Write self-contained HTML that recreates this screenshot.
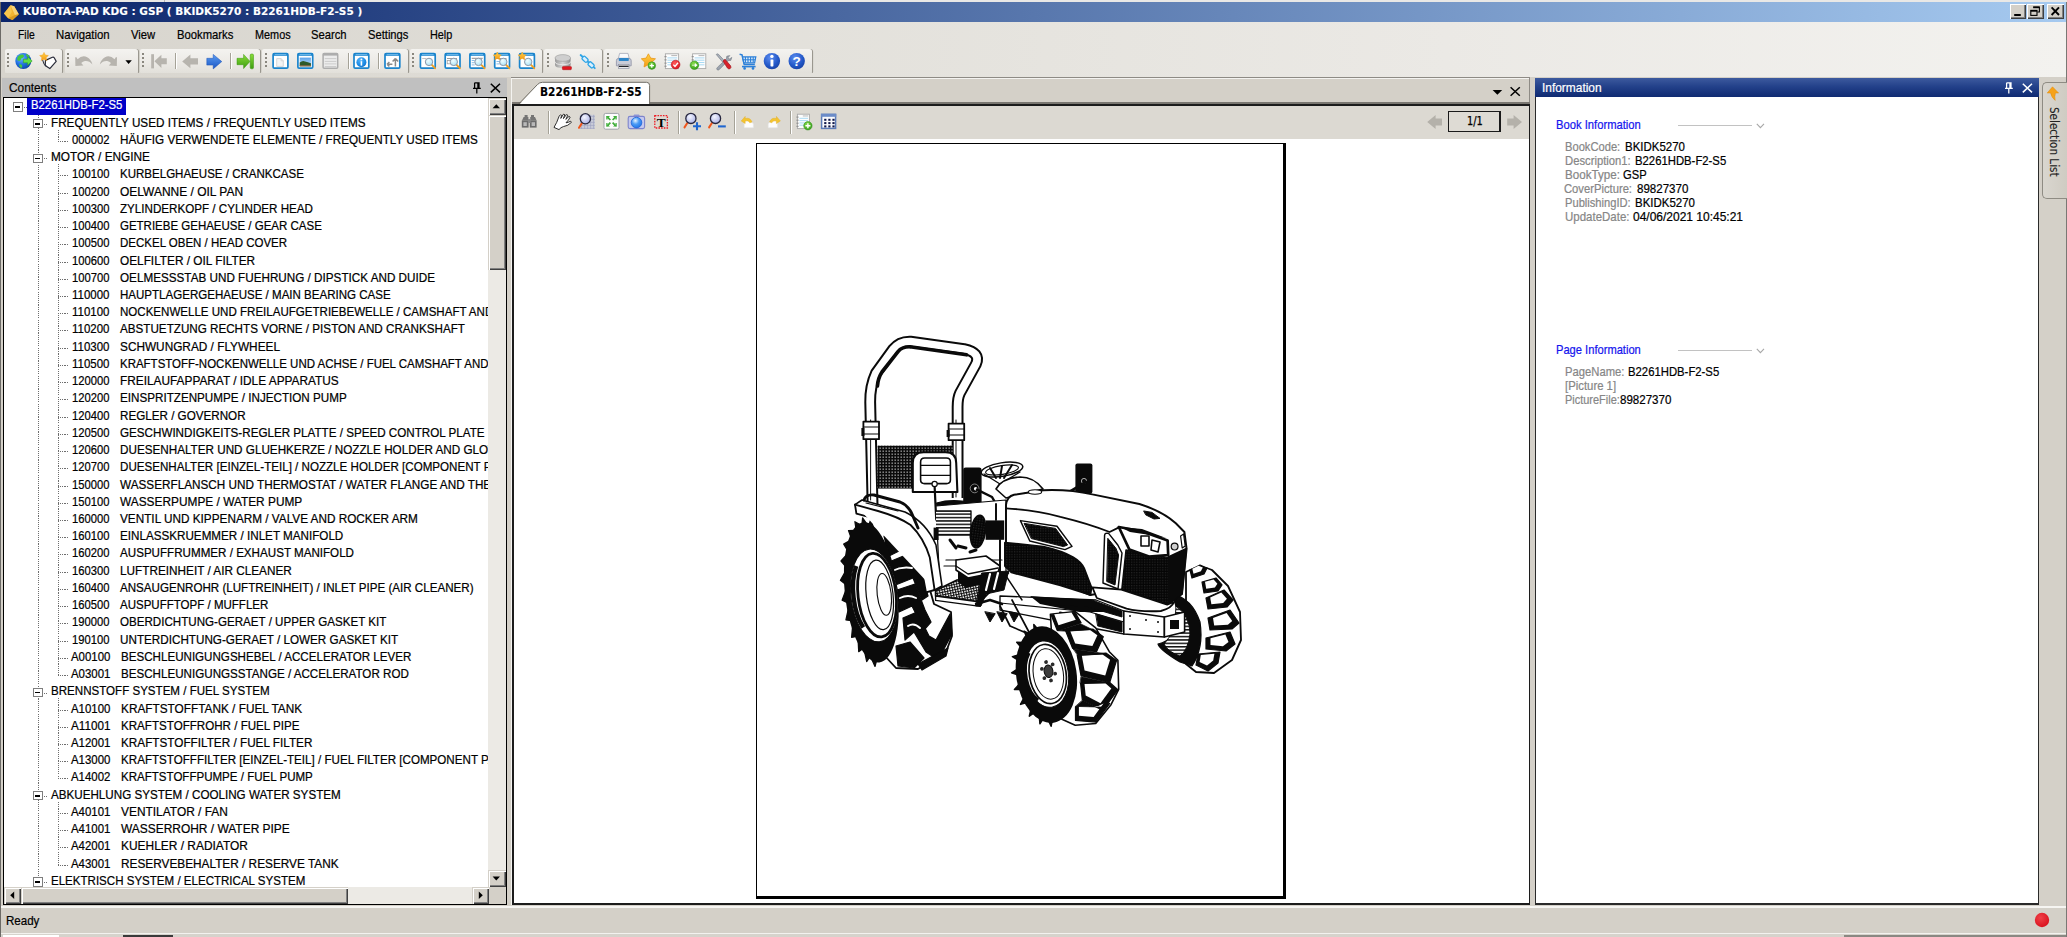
<!DOCTYPE html>
<html lang="de"><head><meta charset="utf-8"><title>KUBOTA-PAD KDG : GSP ( BKIDK5270 : B2261HDB-F2-S5 )</title>
<style>
html,body{margin:0;padding:0;}
body{width:2067px;height:937px;overflow:hidden;background:#d4d0c8;position:relative;font-family:"Liberation Sans",sans-serif;font-size:11.7px;color:#000;}
.a{position:absolute;}
.t{position:absolute;white-space:nowrap;line-height:16px;height:16px;}
#title{left:1px;top:2px;width:2065px;height:19.5px;background:linear-gradient(90deg,#0a246a 0%,#a6caf0 100%);}
#title .t{font-family:"DejaVu Sans Condensed","DejaVu Sans","Liberation Sans",sans-serif;font-weight:bold;color:#fff;font-size:11.6px;left:21px;top:1.5px;}
.wb{position:absolute;top:2.3px;height:14.4px;width:16.4px;background:#d4d0c8;box-shadow:inset 1px 1px 0 #fff,inset -1px -1px 0 #404040,inset -2px -2px 0 #808080;}
#menubar{left:1px;top:21.5px;width:2065px;height:55px;background:linear-gradient(90deg,#d7d4cd 0%,#e2e0da 35%,#ebe9e5 70%,#f3f2ef 100%);}
.mi{position:absolute;top:27px;line-height:16px;font-size:11.7px;white-space:nowrap;}
.strip{position:absolute;top:48.5px;height:24.3px;border-radius:2px 3px 1px 1px;background:linear-gradient(180deg,#f4f3f0 0%,#eceae6 55%,#e2e0da 100%);box-shadow:1.1px 0 0 #9a978f;}
.grip{position:absolute;top:53px;width:2px;height:15px;background:repeating-linear-gradient(180deg,#8a877f 0 2px,rgba(255,255,255,0) 2px 4px);}
.sep{position:absolute;width:1px;background:#a5a297;box-shadow:1px 0 0 #fff;}
.ic{position:absolute;overflow:visible;}
#tree{left:4px;top:98px;width:484.6px;height:789px;background:#fff;overflow:hidden;}
.row{-webkit-text-stroke:0.22px currentColor;position:absolute;white-space:nowrap;line-height:17px;height:17px;font-size:12.7px;color:#000;}
.sx{display:inline-block;transform-origin:0 50%;white-space:pre;}
.box{position:absolute;width:7.5px;height:7.3px;border:1px solid #7e7e7e;background:#fff;}
.box i{position:absolute;left:1.3px;top:3.0px;width:5px;height:1.4px;background:#000;}
.hd{position:absolute;height:1px;background:repeating-linear-gradient(90deg,#6e6e6e 0 1.08px,rgba(255,255,255,0) 1.08px 2.153px);}
.vd{position:absolute;width:1px;background:repeating-linear-gradient(180deg,#6e6e6e 0 1.08px,rgba(255,255,255,0) 1.08px 2.153px);}
.sbtn{position:absolute;background:#d4d0c8;box-shadow:inset 1px 1px 0 #d4d0c8,inset 2px 2px 0 #fff,inset -1px -1px 0 #404040,inset -2px -2px 0 #808080;}
.track{position:absolute;background:#eceae5;}
.lbl{color:#6e6e6e;}
</style></head><body>

<div class="a" style="left:0;top:0;width:2067px;height:2px;background:#e9e8e6"></div>
<div class="a" style="left:164px;top:0;width:1px;height:2px;background:#b8b6b0"></div>
<div class="a" style="left:0;top:2px;width:1px;height:935px;background:#6c6a66"></div>
<div class="a" style="left:2066px;top:2px;width:1px;height:935px;background:#7a7874"></div>
<div id="title" class="a"><svg class="ic" style="left:2px;top:1.5px" width="17" height="17" viewBox="0 0 17 17"><path d="M1 9.5 L7.5 1.2 L11.2 2.2 L15.8 10.2 L9.5 16 L5.2 14.2 Z" fill="#f2b431"/><path d="M7.5 1.2 L11.2 2.2 L15.8 10.2 L12 11 Z" fill="#f7d277"/><path d="M1 9.5 L7.5 1.2 L8.8 8 L5.2 14.2 Z" fill="#f9c64c"/><path d="M5.2 14.2 L9.5 16 L15.8 10.2 L12 11 Z" fill="#d99a1e"/></svg>
<div class="t" style="left:22.00px;top:1.89px;font-size:11.00px;color:#fff;-webkit-text-stroke:0.10px currentColor;font-family:'DejaVu Sans Condensed','DejaVu Sans',sans-serif;font-weight:bold;"><span id="t1" class="sx" style="transform:scaleX(1.0613)">KUBOTA-PAD KDG : GSP ( BKIDK5270 : B2261HDB-F2-S5 )</span></div>
<div class="wb" style="left:2009px"><svg class="ic" style="left:0;top:0" width="16.4" height="14.4" viewBox="0 0 16.4 14.4"><rect x="4.2" y="10" width="6.6" height="2" fill="#000"/></svg></div><div class="wb" style="left:2026.4px"><svg class="ic" style="left:0;top:0" width="16.4" height="14.4" viewBox="0 0 16.4 14.4"><path d="M6.2 3 h6.2 v5 h-2" fill="none" stroke="#000" stroke-width="1.1"/><rect x="6.2" y="2.6" width="6.2" height="1.6" fill="#000"/><rect x="3.8" y="6.4" width="6.2" height="5" fill="none" stroke="#000" stroke-width="1.1"/><rect x="3.8" y="6" width="6.2" height="1.7" fill="#000"/></svg></div><div class="wb" style="left:2045.8px;width:17px"><svg class="ic" style="left:0;top:0" width="17" height="14.4" viewBox="0 0 17 14.4"><path d="M4.6 3.4 L12 11 M12 3.4 L4.6 11" stroke="#000" stroke-width="1.9" fill="none"/></svg></div></div>
<div id="menubar" class="a"></div>
<div class="t" style="left:18.20px;top:27.09px;font-size:13.30px;color:#000;-webkit-text-stroke:0.22px currentColor;"><span id="t2" class="sx" style="transform:scaleX(0.7790)">File</span></div>
<div class="t" style="left:56.40px;top:27.09px;font-size:13.30px;color:#000;-webkit-text-stroke:0.22px currentColor;"><span id="t3" class="sx" style="transform:scaleX(0.8545)">Navigation</span></div>
<div class="t" style="left:131.00px;top:27.09px;font-size:13.30px;color:#000;-webkit-text-stroke:0.22px currentColor;"><span id="t4" class="sx" style="transform:scaleX(0.8463)">View</span></div>
<div class="t" style="left:176.70px;top:27.09px;font-size:13.30px;color:#000;-webkit-text-stroke:0.22px currentColor;"><span id="t5" class="sx" style="transform:scaleX(0.8479)">Bookmarks</span></div>
<div class="t" style="left:254.60px;top:27.09px;font-size:13.30px;color:#000;-webkit-text-stroke:0.22px currentColor;"><span id="t6" class="sx" style="transform:scaleX(0.8166)">Memos</span></div>
<div class="t" style="left:311.30px;top:27.09px;font-size:13.30px;color:#000;-webkit-text-stroke:0.22px currentColor;"><span id="t7" class="sx" style="transform:scaleX(0.8448)">Search</span></div>
<div class="t" style="left:368.00px;top:27.09px;font-size:13.30px;color:#000;-webkit-text-stroke:0.22px currentColor;"><span id="t8" class="sx" style="transform:scaleX(0.8408)">Settings</span></div>
<div class="t" style="left:429.90px;top:27.09px;font-size:13.30px;color:#000;-webkit-text-stroke:0.22px currentColor;"><span id="t9" class="sx" style="transform:scaleX(0.8151)">Help</span></div>
<div class="strip" style="left:4.6px;width:57.9px"></div>
<div class="grip" style="left:7.2px"></div>
<div class="strip" style="left:64.6px;width:73.2px"></div>
<div class="grip" style="left:67.2px"></div>
<div class="strip" style="left:139.8px;width:120.2px"></div>
<div class="grip" style="left:142.4px"></div>
<div class="strip" style="left:262.0px;width:145.6px"></div>
<div class="grip" style="left:264.6px"></div>
<div class="strip" style="left:409.6px;width:132.4px"></div>
<div class="grip" style="left:412.2px"></div>
<div class="strip" style="left:544.0px;width:58.3px"></div>
<div class="grip" style="left:546.6px"></div>
<div class="strip" style="left:604.3px;width:207.7px"></div>
<div class="grip" style="left:606.9px"></div>
<div class="sep" style="left:174.5px;top:53px;height:16px"></div>
<div class="sep" style="left:230.3px;top:53px;height:16px"></div>
<div class="sep" style="left:348.0px;top:53px;height:16px"></div>
<div class="sep" style="left:378.2px;top:53px;height:16px"></div>
<svg class="ic" style="left:0;top:44px" width="830" height="34" viewBox="0 44 830 34"><defs>
<radialGradient id="gGlobe" cx="38%" cy="32%" r="75%"><stop offset="0" stop-color="#6fb6ff"/><stop offset=".55" stop-color="#1f6fe0"/><stop offset="1" stop-color="#0c3fa0"/></radialGradient>
<linearGradient id="gBlue" x1="0" y1="0" x2="0" y2="1"><stop offset="0" stop-color="#5a9cf2"/><stop offset="1" stop-color="#1a56c4"/></linearGradient>
<linearGradient id="gGreen" x1="0" y1="0" x2="0" y2="1"><stop offset="0" stop-color="#8ade3a"/><stop offset="1" stop-color="#3c9c10"/></linearGradient>
<radialGradient id="gInfo" cx="40%" cy="30%" r="80%"><stop offset="0" stop-color="#5d8df0"/><stop offset=".6" stop-color="#2358c8"/><stop offset="1" stop-color="#153c9c"/></radialGradient>
<radialGradient id="gInfo2" cx="40%" cy="30%" r="80%"><stop offset="0" stop-color="#58b4f8"/><stop offset=".6" stop-color="#1c8ce6"/><stop offset="1" stop-color="#1470c8"/></radialGradient>
<radialGradient id="gLens" cx="40%" cy="35%" r="70%"><stop offset="0" stop-color="#f4f6ff"/><stop offset="1" stop-color="#aab0e6"/></radialGradient>
<radialGradient id="gLens2" cx="40%" cy="35%" r="70%"><stop offset="0" stop-color="#f2fdff"/><stop offset="1" stop-color="#a6e2f6"/></radialGradient>
<radialGradient id="gCam" cx="40%" cy="32%" r="75%"><stop offset="0" stop-color="#e6f3ff"/><stop offset=".45" stop-color="#4b9cf6"/><stop offset="1" stop-color="#1c6fe6"/></radialGradient>
<radialGradient id="gRed" cx="40%" cy="32%" r="75%"><stop offset="0" stop-color="#ff5a5a"/><stop offset="1" stop-color="#d80f1c"/></radialGradient>
<radialGradient id="gGrn" cx="40%" cy="32%" r="75%"><stop offset="0" stop-color="#86dc4a"/><stop offset="1" stop-color="#2f9a18"/></radialGradient>
<linearGradient id="gStar" x1="0" y1="0" x2="0" y2="1"><stop offset="0" stop-color="#ffd24a"/><stop offset="1" stop-color="#f59a12"/></linearGradient>
<linearGradient id="gSky" x1="0" y1="0" x2="0" y2="1"><stop offset="0" stop-color="#5aa2ea"/><stop offset="1" stop-color="#cfe6fa"/></linearGradient>
<linearGradient id="gCyl" x1="0" y1="0" x2="1" y2="0"><stop offset="0" stop-color="#9a9a9a"/><stop offset=".5" stop-color="#d6d6d6"/><stop offset="1" stop-color="#8c8c8c"/></linearGradient>
</defs><circle cx="23.3" cy="61" r="8" fill="url(#gGlobe)"/><path d="M18 56.5 q2.5 -2.6 5.5 -1.8 q1.2 1.8 -0.6 3 q-2.2 .4 -2.2 2.6 q-1.8 1.2 -3.4 -.4 q-.4 -1.8 .7 -3.4z M19 64.5 q2 -.8 3.2 1 q.4 1.8 -1 2.6 q-2 -1 -2.2 -3.6z M26 54 q2.2 .4 3.6 2.2 l-2.2 .8 q-1.6 -1 -1.4 -3z" fill="#46c83c"/><path d="M23.4 59.2 h4.2 v-2.6 l4.6 4.4 l-4.6 4.4 v-2.6 h-4.2z" fill="#5fdc46" stroke="#2d9a22" stroke-width=".5"/><path d="M45.5 60.4 L52.4 57.2 Q53.6 56.8 54.2 57.8 L56.2 61.4 L49.8 68.6 L45.2 65.6 Z" fill="#fff" stroke="#2a2c3a" stroke-width="1.2" stroke-linejoin="round"/><path d="M42.6 60 q.8 4.2 3.8 6.4" fill="none" stroke="#2a2c3a" stroke-width="1.1"/><path d="M44 52.4 l1.4 2.7 l3 .4 l-2.2 2.1 l.5 3 l-2.7 -1.4 l-2.7 1.4 l.5 -3 l-2.2 -2.1 l3 -.4z" fill="url(#gStar)" stroke="#ee9410" stroke-width=".4"/><path d="M75.2 57.2 l1.2 0 l1.2 2 q4.6 -4.4 9.6 -2 q4 2.2 5.2 7.2 q-3.2 -3.8 -7.4 -3.4 q-2.2 .4 -3.8 2 l2.2 2.4 l-8 .6z" fill="#b7b4ae"/><path d="M117 57.2 l-1.2 0 l-1.2 2 q-4.6 -4.4 -9.6 -2 q-4 2.2 -5.2 7.2 q3.2 -3.8 7.4 -3.4 q2.2 .4 3.8 2 l-2.2 2.4 l8 .6z" fill="#b7b4ae"/><polygon points="125.4,60.2 131.8,60.2 128.6,64" fill="#000"/><rect x="151.2" y="54.2" width="2.8" height="14.2" fill="#b7b4ae"/><path d="M154.4 61.3 l7 -6.6 v3.6 h5.4 v6 h-5.4 v3.6z" fill="#b7b4ae"/><path d="M182.2 61.4 l8.2 -6.8 v3.7 h7.6 v6.3 h-7.6 v3.7z" fill="#b7b4ae"/><path d="M221.8 61.6 l-8.6 -7.2 v3.9 h-6.4 v6.8 h6.4 v3.8z" fill="url(#gBlue)" stroke="#1a50b4" stroke-width=".5"/><path d="M250 61.4 l-6.4 -7 v3.9 h-6.6 v6.4 h6.6 v3.9z" fill="url(#gGreen)" stroke="#3a9410" stroke-width=".5"/><rect x="250.2" y="54" width="3.3" height="14.8" rx="1.2" fill="url(#gGreen)" stroke="#3a9410" stroke-width=".5"/><rect x="273.1" y="53.6" width="14.8" height="14.6" rx="1.2" fill="#fff" stroke="#1b84cc" stroke-width="1.7"/><rect x="273.0" y="53.2" width="15" height="2.6" fill="#1b84cc"/><rect x="274.7" y="54.2" width="11.6" height=".9" fill="#7cc0ee"/><path d="M276.7 58.6 h4.4 l2.2 2.2 v5.6 h-6.6z" fill="#f4f4f4" stroke="#cfcfcf" stroke-width=".8"/><path d="M281.1 58.6 v2.2 h2.2" fill="none" stroke="#cfcfcf" stroke-width=".8"/><rect x="297.9" y="53.6" width="14.8" height="14.6" rx="1.2" fill="#fff" stroke="#1b84cc" stroke-width="1.7"/><rect x="297.8" y="53.2" width="15" height="2.6" fill="#1b84cc"/><rect x="299.5" y="54.2" width="11.6" height=".9" fill="#7cc0ee"/><rect x="299.7" y="57.6" width="11.2" height="8.6" fill="url(#gSky)"/><path d="M299.7 66.2 v-3.6 q3 -2.6 5.4 -1 q2.8 .6 5.8 1.6 v3z" fill="#2e5a2a"/><rect x="299.7" y="65.2" width="11.2" height="1.2" fill="#8a6a4a"/><rect x="323.1" y="53.6" width="14.6" height="14.6" rx="1" fill="#ececec" stroke="#adadad" stroke-width="1.5"/><rect x="322.9" y="53.2" width="15" height="2.4" fill="#adadad"/><rect x="324.7" y="58.3" width="11.6" height=".8" fill="#c4c4c4"/><rect x="324.7" y="60.9" width="11.6" height=".8" fill="#c4c4c4"/><rect x="324.7" y="63.5" width="11.6" height=".8" fill="#c4c4c4"/><rect x="324.7" y="66.1" width="11.6" height=".8" fill="#c4c4c4"/><rect x="354.0" y="53.6" width="14.8" height="14.6" rx="1.2" fill="#fff" stroke="#1b84cc" stroke-width="1.7"/><rect x="353.9" y="53.2" width="15" height="2.6" fill="#1b84cc"/><rect x="355.6" y="54.2" width="11.6" height=".9" fill="#7cc0ee"/><circle cx="361.4" cy="62.2" r="5" fill="url(#gInfo2)"/><rect x="360.6" y="61.2" width="1.6" height="4.4" fill="#fff"/><circle cx="361.4" cy="59.4" r=".95" fill="#fff"/><rect x="385.0" y="53.6" width="14.8" height="14.6" rx="1.2" fill="#fff" stroke="#1b84cc" stroke-width="1.7"/><rect x="384.9" y="53.2" width="15" height="2.6" fill="#1b84cc"/><rect x="386.6" y="54.2" width="11.6" height=".9" fill="#7cc0ee"/><path d="M387.2 64.2 h5.2 M387.0 64.2 l2.4 -2.2 M387.0 64.2 l2.4 2.2 M395.4 66.4 v-7.6 M395.4 58.4 l-2.8 3 M395.4 58.4 l2.8 3" fill="none" stroke="#8a8a8a" stroke-width="1.5"/><rect x="420.4" y="53.6" width="14.8" height="14.6" rx="1.2" fill="#fff" stroke="#1b84cc" stroke-width="1.7"/><rect x="420.3" y="53.2" width="15" height="2.6" fill="#1b84cc"/><rect x="422.0" y="54.2" width="11.6" height=".9" fill="#7cc0ee"/><rect x="422.2" y="58" width="4" height=".9" fill="#b9b9b9"/><path d="M431.6 64.6 l3.4 3.6" stroke="#f0a020" stroke-width="1.9" stroke-linecap="round"/><circle cx="429.0" cy="61.9" r="3.7" fill="url(#gLens2)" stroke="#8f97a8" stroke-width="1"/><rect x="445.2" y="53.6" width="14.8" height="14.6" rx="1.2" fill="#fff" stroke="#1b84cc" stroke-width="1.7"/><rect x="445.1" y="53.2" width="15" height="2.6" fill="#1b84cc"/><rect x="446.8" y="54.2" width="11.6" height=".9" fill="#7cc0ee"/><rect x="447.0" y="58" width="10" height="1" fill="#9d9d9d"/><rect x="447.2" y="60.4" width="4" height="3.4" fill="none" stroke="#9d9d9d" stroke-width=".8"/><path d="M456.4 64.6 l3.4 3.6" stroke="#f0a020" stroke-width="1.9" stroke-linecap="round"/><circle cx="453.8" cy="61.9" r="3.7" fill="url(#gLens2)" stroke="#8f97a8" stroke-width="1"/><rect x="469.9" y="53.6" width="14.8" height="14.6" rx="1.2" fill="#fff" stroke="#1b84cc" stroke-width="1.7"/><rect x="469.8" y="53.2" width="15" height="2.6" fill="#1b84cc"/><rect x="471.5" y="54.2" width="11.6" height=".9" fill="#7cc0ee"/><rect x="471.7" y="57.8" width="11" height="1" fill="#8d8d8d"/><rect x="471.7" y="60" width="3" height="1" fill="#8abde8"/><rect x="471.7" y="62.2" width="3" height="1" fill="#8abde8"/><rect x="471.7" y="64.4" width="3" height="1" fill="#8abde8"/><path d="M481.1 64.6 l3.4 3.6" stroke="#f0a020" stroke-width="1.9" stroke-linecap="round"/><circle cx="478.5" cy="61.9" r="3.7" fill="url(#gLens2)" stroke="#8f97a8" stroke-width="1"/><rect x="494.7" y="53.6" width="14.8" height="14.6" rx="1.2" fill="#fff" stroke="#1b84cc" stroke-width="1.7"/><rect x="494.6" y="53.2" width="15" height="2.6" fill="#1b84cc"/><rect x="496.3" y="54.2" width="11.6" height=".9" fill="#7cc0ee"/><rect x="496.5" y="58" width="10" height="1" fill="#9d9d9d"/><rect x="496.5" y="61" width="3.4" height="1" fill="#8abde8"/><rect x="496.5" y="63.4" width="3.4" height="1" fill="#8abde8"/><path d="M505.9 64.6 l3.4 3.6" stroke="#f0a020" stroke-width="1.9" stroke-linecap="round"/><circle cx="503.3" cy="61.9" r="3.7" fill="url(#gLens2)" stroke="#8f97a8" stroke-width="1"/><path d="M497.3 52 l1.3 2.5 l2.8 .4 l-2 2 l.5 2.8 l-2.6 -1.3 l-2.6 1.3 l.5 -2.8 l-2 -2 l2.8 -.4z" fill="url(#gStar)" stroke="#ee9410" stroke-width=".4"/><rect x="519.6" y="53.6" width="14.8" height="14.6" rx="1.2" fill="#fff" stroke="#1b84cc" stroke-width="1.7"/><rect x="519.5" y="53.2" width="15" height="2.6" fill="#1b84cc"/><rect x="521.2" y="54.2" width="11.6" height=".9" fill="#7cc0ee"/><path d="M530.8 64.6 l3.4 3.6" stroke="#f0a020" stroke-width="1.9" stroke-linecap="round"/><circle cx="528.2" cy="61.9" r="3.7" fill="url(#gLens2)" stroke="#8f97a8" stroke-width="1"/><path d="M522.2 52 l1.3 2.5 l2.8 .4 l-2 2 l.5 2.8 l-2.6 -1.3 l-2.6 1.3 l.5 -2.8 l-2 -2 l2.8 -.4z" fill="url(#gStar)" stroke="#ee9410" stroke-width=".4"/><path d="M555 58 v7 q0 3 7.8 3 q7.8 0 7.8 -3 v-7z" fill="url(#gCyl)"/><ellipse cx="562.8" cy="58" rx="7.8" ry="3.4" fill="#cfcfcf" stroke="#9c9c9c" stroke-width=".6"/><path d="M555 61.6 q0 3 7.8 3 q7.8 0 7.8 -3" fill="none" stroke="#e8e8e8" stroke-width=".9"/><rect x="562.4" y="66.4" width="9" height="3.3" rx=".8" fill="#e01820" stroke="#a80c12" stroke-width=".5"/><path d="M580.6 55 l14.2 13.2" stroke="#2ea4e6" stroke-width="1.8" stroke-linecap="round"/><g transform="rotate(43 585 59.2)"><rect x="582" y="57.2" width="6.2" height="4" rx="1.4" fill="#d8f0ff" stroke="#2ea4e6" stroke-width="1.3"/></g><g transform="rotate(43 591 64.8)"><rect x="588" y="62.8" width="6.2" height="4" rx="1.4" fill="#d8f0ff" stroke="#2ea4e6" stroke-width="1.3"/></g><path d="M619.6 53.4 h8.4 l1.2 5 h-10.8z" fill="#fbfbfd" stroke="#a4a8b8" stroke-width=".8"/><path d="M616.4 60.6 q0 -2.2 2.2 -2.2 h10.4 q2.2 0 2.2 2.2 v5.2 h-14.8z" fill="#c9ccd8" stroke="#8e92a4" stroke-width=".8"/><rect x="618.8" y="58" width="10" height="3" rx=".8" fill="#2f86c8"/><rect x="618.6" y="64.4" width="10.4" height="4.2" fill="#fdfdfd" stroke="#8e92a4" stroke-width=".7"/><rect x="619" y="65.6" width="9.6" height="1.5" fill="#23252c"/><path d="M648.4 53.8 l2.3 4.3 l4.8 .7 l-3.5 3.3 l.9 4.8 l-4.5 -2.3 l-4.4 2.4 l.8 -4.8 l-3.5 -3.4 l4.8 -.7z" fill="url(#gStar)" stroke="#e8900c" stroke-width=".7" stroke-linejoin="round"/><circle cx="651.8" cy="65.6" r="3.8" fill="url(#gGrn)" stroke="#2a8a14" stroke-width=".5"/><path d="M649.6 65.6 h4.4 M651.8 63.4 v4.4" stroke="#fff" stroke-width="1.3"/><rect x="665.4" y="53.8" width="13.2" height="14.8" fill="#fdfdfd" stroke="#a9a9a9" stroke-width=".9"/><rect x="671.3" y="55.0" width="5.9" height="1.1" fill="#bdbdbd"/><rect x="667.4" y="57.4" width="9.8" height="1" fill="#a9daf4"/><rect x="667.4" y="59.7" width="9.8" height="1" fill="#a9daf4"/><rect x="667.4" y="62.0" width="9.8" height="1" fill="#a9daf4"/><rect x="667.4" y="64.3" width="9.8" height="1" fill="#a9daf4"/><rect x="664.4" y="56.2" width="2.2" height="1" fill="#8a8a8a"/><rect x="664.4" y="59.4" width="2.2" height="1" fill="#8a8a8a"/><rect x="664.4" y="62.6" width="2.2" height="1" fill="#8a8a8a"/><rect x="664.4" y="65.7" width="2.2" height="1" fill="#8a8a8a"/><circle cx="675.6" cy="64.6" r="4.4" fill="url(#gRed)" stroke="#b00a14" stroke-width=".5"/><path d="M673.4 64.6 l1.6 1.8 l3 -3.6" fill="none" stroke="#fff" stroke-width="1.4"/><rect x="692.6" y="53.8" width="13.2" height="14.8" fill="#fdfdfd" stroke="#a9a9a9" stroke-width=".9"/><rect x="698.5" y="55.0" width="5.9" height="1.1" fill="#bdbdbd"/><rect x="694.6" y="57.4" width="9.8" height="1" fill="#a9daf4"/><rect x="694.6" y="59.7" width="9.8" height="1" fill="#a9daf4"/><rect x="694.6" y="62.0" width="9.8" height="1" fill="#a9daf4"/><rect x="694.6" y="64.3" width="9.8" height="1" fill="#a9daf4"/><rect x="691.6" y="56.2" width="2.2" height="1" fill="#8a8a8a"/><rect x="691.6" y="59.4" width="2.2" height="1" fill="#8a8a8a"/><rect x="691.6" y="62.6" width="2.2" height="1" fill="#8a8a8a"/><rect x="691.6" y="65.7" width="2.2" height="1" fill="#8a8a8a"/><circle cx="694.4" cy="65.2" r="4.3" fill="url(#gGrn)" stroke="#2a8a14" stroke-width=".5"/><path d="M692 65.2 h3 v-1.6 l2.2 1.6 l-2.2 1.6 v-1.6" fill="#fff" stroke="#fff" stroke-width=".7"/><path d="M729.8 55.6 l-3 .6 l-.4 2.6 l-9 8.6 q-1.4 1.4 -.2 2.4 q1 .8 2.2 -.4 l8.8 -8.8 l2.6 -.2 l1 -3 l-2.2 1.6 l-1.6 -1.4z" fill="#9ca3ae" stroke="#6f7782" stroke-width=".6"/><path d="M716.2 54.4 l1.8 -.6 l6 6.4 l-1.6 1.6z" fill="#aab0ba" stroke="#6f7782" stroke-width=".6"/><path d="M723 61 l2 -1.8 l5.6 6.6 q1 1.8 -.4 2.8 q-1.4 1 -2.8 -.6z" fill="#d8202a" stroke="#9a0c14" stroke-width=".6"/><path d="M739.6 54.2 l2.4 .6 l2.2 9.8 h10.6" fill="none" stroke="#2b7fd8" stroke-width="1.5"/><path d="M742.6 56.8 h13.2 l-1.2 6 h-10.8z" fill="#dcecfb" stroke="#2b7fd8" stroke-width="1.2"/><path d="M745.4 57 v5.6" stroke="#2b7fd8" stroke-width="1.1"/><path d="M748.0 57 v5.6" stroke="#2b7fd8" stroke-width="1.1"/><path d="M750.6 57 v5.6" stroke="#2b7fd8" stroke-width="1.1"/><path d="M753.2 57 v5.6" stroke="#2b7fd8" stroke-width="1.1"/><path d="M743 59.8 h12.4" stroke="#2b7fd8" stroke-width="1"/><path d="M742 66.6 h13.6" stroke="#2b7fd8" stroke-width="1.6"/><circle cx="744.6" cy="68.4" r="1.3" fill="#2b7fd8"/><circle cx="753" cy="68.4" r="1.3" fill="#2b7fd8"/><circle cx="771.9" cy="61.1" r="8.2" fill="url(#gInfo)"/><rect x="770.5" y="59.4" width="2.9" height="7" rx=".6" fill="#fff"/><circle cx="771.9" cy="56.4" r="1.7" fill="#fff"/><circle cx="796.7" cy="61.1" r="8.2" fill="url(#gInfo)"/><text x="796.7" y="66.2" text-anchor="middle" font-family="Liberation Sans, sans-serif" font-weight="bold" font-size="13.6" fill="#fff">?</text></svg>
<div class="a" style="left:2px;top:77.6px;width:505px;height:19.6px;background:#c0c0c0"></div>
<div class="t" style="left:8.70px;top:80.43px;font-size:12.90px;color:#000;-webkit-text-stroke:0.22px currentColor;"><span id="t10" class="sx" style="transform:scaleX(0.9184)">Contents</span></div>
<svg class="ic" style="left:471.5px;top:81.5px" width="10" height="13" viewBox="0 0 10 13"><path d="M2.6 0.8 H7 V6.2 M2.6 0.8 V6.2 M5.9 0.8 V6.2 M1 6.4 H8.8 M4.8 6.6 V11.6" stroke="#000" stroke-width="1.25" fill="none"/></svg>
<svg class="ic" style="left:490px;top:83px" width="11" height="10" viewBox="0 0 11 10"><path d="M0.8 0.8 L10 9.4 M10 0.8 L0.8 9.4" stroke="#000" stroke-width="1.5" fill="none"/></svg>
<div class="a" style="left:3px;top:97px;width:504px;height:808px;background:#000"></div>
<div class="a" style="left:4px;top:98px;width:501.6px;height:805.6px;background:#d4d0c8"></div>
<div id="tree" class="a">
<div class="vd" style="left:33.8px;top:17.0px;height:772.0px"></div>
<div class="vd" style="left:53.8px;top:31.7px;height:11.3px"></div>
<div class="vd" style="left:53.8px;top:66.2px;height:511.0px"></div>
<div class="vd" style="left:53.8px;top:600.3px;height:80.2px"></div>
<div class="vd" style="left:53.8px;top:703.7px;height:63.0px"></div>
<div class="box" style="left:9.1px;top:4.3px"><i></i></div>
<div class="hd" style="left:19.6px;top:9.0px;width:4px"></div>
<div class="a" style="left:23px;top:0.0px;width:98.8px;height:16.9px;background:#0000c8"></div>
<div class="row" style="left:26.6px;top:-0.6px"><span id="r0" class="sx" style="transform:scaleX(0.8939);color:#fff">B2261HDB-F2-S5</span></div>
<div class="box" style="left:29.2px;top:21.2px"><i></i></div>
<div class="hd" style="left:40.2px;top:25.9px;width:4.3px"></div>
<div class="row" style="left:46.7px;top:16.7px"><span id="r1" class="sx" style="transform:scaleX(0.9227)">FREQUENTLY USED ITEMS / FREQUENTLY USED ITEMS</span></div>
<div class="hd" style="left:53.8px;top:42.9px;width:10.2px"></div>
<div class="row" style="left:68.2px;top:33.9px"><span id="c2" class="sx" style="transform:scaleX(0.8832)">000002</span></div>
<div class="row" style="left:115.7px;top:33.9px"><span id="r2" class="sx" style="transform:scaleX(0.9209)">HÄUFIG VERWENDETE ELEMENTE / FREQUENTLY USED ITEMS</span></div>
<div class="box" style="left:29.2px;top:55.7px"><i></i></div>
<div class="hd" style="left:40.2px;top:60.4px;width:4.3px"></div>
<div class="row" style="left:46.7px;top:51.1px"><span id="r3" class="sx" style="transform:scaleX(0.9320)">MOTOR / ENGINE</span></div>
<div class="hd" style="left:53.8px;top:77.3px;width:10.2px"></div>
<div class="row" style="left:68.2px;top:68.4px"><span id="c4" class="sx" style="transform:scaleX(0.8832)">100100</span></div>
<div class="row" style="left:115.7px;top:68.4px"><span id="r4" class="sx" style="transform:scaleX(0.9088)">KURBELGHAEUSE / CRANKCASE</span></div>
<div class="hd" style="left:53.8px;top:94.6px;width:10.2px"></div>
<div class="row" style="left:68.2px;top:85.6px"><span id="c5" class="sx" style="transform:scaleX(0.8832)">100200</span></div>
<div class="row" style="left:115.7px;top:85.6px"><span id="r5" class="sx" style="transform:scaleX(0.9437)">OELWANNE / OIL PAN</span></div>
<div class="hd" style="left:53.8px;top:111.8px;width:10.2px"></div>
<div class="row" style="left:68.2px;top:102.8px"><span id="c6" class="sx" style="transform:scaleX(0.8832)">100300</span></div>
<div class="row" style="left:115.7px;top:102.8px"><span id="r6" class="sx" style="transform:scaleX(0.9156)">ZYLINDERKOPF / CYLINDER HEAD</span></div>
<div class="hd" style="left:53.8px;top:129.0px;width:10.2px"></div>
<div class="row" style="left:68.2px;top:120.1px"><span id="c7" class="sx" style="transform:scaleX(0.8832)">100400</span></div>
<div class="row" style="left:115.7px;top:120.1px"><span id="r7" class="sx" style="transform:scaleX(0.9058)">GETRIEBE GEHAEUSE / GEAR CASE</span></div>
<div class="hd" style="left:53.8px;top:146.2px;width:10.2px"></div>
<div class="row" style="left:68.2px;top:137.3px"><span id="c8" class="sx" style="transform:scaleX(0.8832)">100500</span></div>
<div class="row" style="left:115.7px;top:137.3px"><span id="r8" class="sx" style="transform:scaleX(0.9069)">DECKEL OBEN / HEAD COVER</span></div>
<div class="hd" style="left:53.8px;top:163.5px;width:10.2px"></div>
<div class="row" style="left:68.2px;top:154.5px"><span id="c9" class="sx" style="transform:scaleX(0.8832)">100600</span></div>
<div class="row" style="left:115.7px;top:154.5px"><span id="r9" class="sx" style="transform:scaleX(0.9317)">OELFILTER / OIL FILTER</span></div>
<div class="hd" style="left:53.8px;top:180.7px;width:10.2px"></div>
<div class="row" style="left:68.2px;top:171.8px"><span id="c10" class="sx" style="transform:scaleX(0.8832)">100700</span></div>
<div class="row" style="left:115.7px;top:171.8px"><span id="r10" class="sx" style="transform:scaleX(0.9219)">OELMESSSTAB UND FUEHRUNG / DIPSTICK AND DUIDE</span></div>
<div class="hd" style="left:53.8px;top:197.9px;width:10.2px"></div>
<div class="row" style="left:68.2px;top:189.0px"><span id="c11" class="sx" style="transform:scaleX(0.9032)">110000</span></div>
<div class="row" style="left:115.7px;top:189.0px"><span id="r11" class="sx" style="transform:scaleX(0.9098)">HAUPTLAGERGEHAEUSE / MAIN BEARING CASE</span></div>
<div class="hd" style="left:53.8px;top:215.2px;width:10.2px"></div>
<div class="row" style="left:68.2px;top:206.2px"><span id="c12" class="sx" style="transform:scaleX(0.9032)">110100</span></div>
<div class="row" style="left:115.7px;top:206.2px"><span id="r12" class="sx" style="transform:scaleX(0.9102)">NOCKENWELLE UND FREILAUFGETRIEBEWELLE / CAMSHAFT AND IDLE GEAR SHAFT</span></div>
<div class="hd" style="left:53.8px;top:232.4px;width:10.2px"></div>
<div class="row" style="left:68.2px;top:223.4px"><span id="c13" class="sx" style="transform:scaleX(0.9032)">110200</span></div>
<div class="row" style="left:115.7px;top:223.4px"><span id="r13" class="sx" style="transform:scaleX(0.9187)">ABSTUETZUNG RECHTS VORNE / PISTON AND CRANKSHAFT</span></div>
<div class="hd" style="left:53.8px;top:249.6px;width:10.2px"></div>
<div class="row" style="left:68.2px;top:240.7px"><span id="c14" class="sx" style="transform:scaleX(0.9032)">110300</span></div>
<div class="row" style="left:115.7px;top:240.7px"><span id="r14" class="sx" style="transform:scaleX(0.9315)">SCHWUNGRAD / FLYWHEEL</span></div>
<div class="hd" style="left:53.8px;top:266.8px;width:10.2px"></div>
<div class="row" style="left:68.2px;top:257.9px"><span id="c15" class="sx" style="transform:scaleX(0.9032)">110500</span></div>
<div class="row" style="left:115.7px;top:257.9px"><span id="r15" class="sx" style="transform:scaleX(0.9048)">KRAFTSTOFF-NOCKENWELLE UND ACHSE / FUEL CAMSHAFT AND GOVERNOR SHAFT</span></div>
<div class="hd" style="left:53.8px;top:284.1px;width:10.2px"></div>
<div class="row" style="left:68.2px;top:275.1px"><span id="c16" class="sx" style="transform:scaleX(0.8832)">120000</span></div>
<div class="row" style="left:115.7px;top:275.1px"><span id="r16" class="sx" style="transform:scaleX(0.9334)">FREILAUFAPPARAT / IDLE APPARATUS</span></div>
<div class="hd" style="left:53.8px;top:301.3px;width:10.2px"></div>
<div class="row" style="left:68.2px;top:292.4px"><span id="c17" class="sx" style="transform:scaleX(0.8832)">120200</span></div>
<div class="row" style="left:115.7px;top:292.4px"><span id="r17" class="sx" style="transform:scaleX(0.9188)">EINSPRITZENPUMPE / INJECTION PUMP</span></div>
<div class="hd" style="left:53.8px;top:318.5px;width:10.2px"></div>
<div class="row" style="left:68.2px;top:309.6px"><span id="c18" class="sx" style="transform:scaleX(0.8832)">120400</span></div>
<div class="row" style="left:115.7px;top:309.6px"><span id="r18" class="sx" style="transform:scaleX(0.9183)">REGLER / GOVERNOR</span></div>
<div class="hd" style="left:53.8px;top:335.8px;width:10.2px"></div>
<div class="row" style="left:68.2px;top:326.8px"><span id="c19" class="sx" style="transform:scaleX(0.8832)">120500</span></div>
<div class="row" style="left:115.7px;top:326.8px"><span id="r19" class="sx" style="transform:scaleX(0.9175)">GESCHWINDIGKEITS-REGLER PLATTE / SPEED CONTROL PLATE</span></div>
<div class="hd" style="left:53.8px;top:353.0px;width:10.2px"></div>
<div class="row" style="left:68.2px;top:344.1px"><span id="c20" class="sx" style="transform:scaleX(0.8832)">120600</span></div>
<div class="row" style="left:115.7px;top:344.1px"><span id="r20" class="sx" style="transform:scaleX(0.9214)">DUESENHALTER UND GLUEHKERZE / NOZZLE HOLDER AND GLOW PLUG</span></div>
<div class="hd" style="left:53.8px;top:370.2px;width:10.2px"></div>
<div class="row" style="left:68.2px;top:361.3px"><span id="c21" class="sx" style="transform:scaleX(0.8832)">120700</span></div>
<div class="row" style="left:115.7px;top:361.3px"><span id="r21" class="sx" style="transform:scaleX(0.9142)">DUESENHALTER [EINZEL-TEIL] / NOZZLE HOLDER [COMPONENT PARTS]</span></div>
<div class="hd" style="left:53.8px;top:387.5px;width:10.2px"></div>
<div class="row" style="left:68.2px;top:378.5px"><span id="c22" class="sx" style="transform:scaleX(0.8832)">150000</span></div>
<div class="row" style="left:115.7px;top:378.5px"><span id="r22" class="sx" style="transform:scaleX(0.9260)">WASSERFLANSCH UND THERMOSTAT / WATER FLANGE AND THERMOSTAT</span></div>
<div class="hd" style="left:53.8px;top:404.7px;width:10.2px"></div>
<div class="row" style="left:68.2px;top:395.7px"><span id="c23" class="sx" style="transform:scaleX(0.8832)">150100</span></div>
<div class="row" style="left:115.7px;top:395.7px"><span id="r23" class="sx" style="transform:scaleX(0.9358)">WASSERPUMPE / WATER PUMP</span></div>
<div class="hd" style="left:53.8px;top:421.9px;width:10.2px"></div>
<div class="row" style="left:68.2px;top:413.0px"><span id="c24" class="sx" style="transform:scaleX(0.8832)">160000</span></div>
<div class="row" style="left:115.7px;top:413.0px"><span id="r24" class="sx" style="transform:scaleX(0.9270)">VENTIL UND KIPPENARM / VALVE AND ROCKER ARM</span></div>
<div class="hd" style="left:53.8px;top:439.1px;width:10.2px"></div>
<div class="row" style="left:68.2px;top:430.2px"><span id="c25" class="sx" style="transform:scaleX(0.8832)">160100</span></div>
<div class="row" style="left:115.7px;top:430.2px"><span id="r25" class="sx" style="transform:scaleX(0.9189)">EINLASSKRUEMMER / INLET MANIFOLD</span></div>
<div class="hd" style="left:53.8px;top:456.4px;width:10.2px"></div>
<div class="row" style="left:68.2px;top:447.4px"><span id="c26" class="sx" style="transform:scaleX(0.8832)">160200</span></div>
<div class="row" style="left:115.7px;top:447.4px"><span id="r26" class="sx" style="transform:scaleX(0.9153)">AUSPUFFRUMMER / EXHAUST MANIFOLD</span></div>
<div class="hd" style="left:53.8px;top:473.6px;width:10.2px"></div>
<div class="row" style="left:68.2px;top:464.7px"><span id="c27" class="sx" style="transform:scaleX(0.8832)">160300</span></div>
<div class="row" style="left:115.7px;top:464.7px"><span id="r27" class="sx" style="transform:scaleX(0.9277)">LUFTREINHEIT / AIR CLEANER</span></div>
<div class="hd" style="left:53.8px;top:490.8px;width:10.2px"></div>
<div class="row" style="left:68.2px;top:481.9px"><span id="c28" class="sx" style="transform:scaleX(0.8832)">160400</span></div>
<div class="row" style="left:115.7px;top:481.9px"><span id="r28" class="sx" style="transform:scaleX(0.9139)">ANSAUGENROHR (LUFTREINHEIT) / INLET PIPE (AIR CLEANER)</span></div>
<div class="hd" style="left:53.8px;top:508.1px;width:10.2px"></div>
<div class="row" style="left:68.2px;top:499.1px"><span id="c29" class="sx" style="transform:scaleX(0.8832)">160500</span></div>
<div class="row" style="left:115.7px;top:499.1px"><span id="r29" class="sx" style="transform:scaleX(0.9081)">AUSPUFFTOPF / MUFFLER</span></div>
<div class="hd" style="left:53.8px;top:525.3px;width:10.2px"></div>
<div class="row" style="left:68.2px;top:516.4px"><span id="c30" class="sx" style="transform:scaleX(0.8832)">190000</span></div>
<div class="row" style="left:115.7px;top:516.4px"><span id="r30" class="sx" style="transform:scaleX(0.9142)">OBERDICHTUNG-GERAET / UPPER GASKET KIT</span></div>
<div class="hd" style="left:53.8px;top:542.5px;width:10.2px"></div>
<div class="row" style="left:68.2px;top:533.6px"><span id="c31" class="sx" style="transform:scaleX(0.8832)">190100</span></div>
<div class="row" style="left:115.7px;top:533.6px"><span id="r31" class="sx" style="transform:scaleX(0.9213)">UNTERDICHTUNG-GERAET / LOWER GASKET KIT</span></div>
<div class="hd" style="left:53.8px;top:559.8px;width:10.2px"></div>
<div class="row" style="left:66.8px;top:550.8px"><span id="c32" class="sx" style="transform:scaleX(0.9006)">A00100</span></div>
<div class="row" style="left:116.6px;top:550.8px"><span id="r32" class="sx" style="transform:scaleX(0.9139)">BESCHLEUNIGUNGSHEBEL / ACCELERATOR LEVER</span></div>
<div class="hd" style="left:53.8px;top:577.0px;width:10.2px"></div>
<div class="row" style="left:66.8px;top:568.0px"><span id="c33" class="sx" style="transform:scaleX(0.9006)">A03001</span></div>
<div class="row" style="left:116.6px;top:568.0px"><span id="r33" class="sx" style="transform:scaleX(0.9153)">BESCHLEUNIGUNGSSTANGE / ACCELERATOR ROD</span></div>
<div class="box" style="left:29.2px;top:589.8px"><i></i></div>
<div class="hd" style="left:40.2px;top:594.5px;width:4.3px"></div>
<div class="row" style="left:46.7px;top:585.3px"><span id="r34" class="sx" style="transform:scaleX(0.9120)">BRENNSTOFF SYSTEM / FUEL SYSTEM</span></div>
<div class="hd" style="left:53.8px;top:611.5px;width:10.2px"></div>
<div class="row" style="left:66.8px;top:602.5px"><span id="c35" class="sx" style="transform:scaleX(0.9006)">A10100</span></div>
<div class="row" style="left:116.6px;top:602.5px"><span id="r35" class="sx" style="transform:scaleX(0.9308)">KRAFTSTOFFTANK / FUEL TANK</span></div>
<div class="hd" style="left:53.8px;top:628.7px;width:10.2px"></div>
<div class="row" style="left:66.8px;top:619.7px"><span id="c36" class="sx" style="transform:scaleX(0.9203)">A11001</span></div>
<div class="row" style="left:116.6px;top:619.7px"><span id="r36" class="sx" style="transform:scaleX(0.9141)">KRAFTSTOFFROHR / FUEL PIPE</span></div>
<div class="hd" style="left:53.8px;top:645.9px;width:10.2px"></div>
<div class="row" style="left:66.8px;top:637.0px"><span id="c37" class="sx" style="transform:scaleX(0.9006)">A12001</span></div>
<div class="row" style="left:116.6px;top:637.0px"><span id="r37" class="sx" style="transform:scaleX(0.9256)">KRAFTSTOFFILTER / FUEL FILTER</span></div>
<div class="hd" style="left:53.8px;top:663.1px;width:10.2px"></div>
<div class="row" style="left:66.8px;top:654.2px"><span id="c38" class="sx" style="transform:scaleX(0.9006)">A13000</span></div>
<div class="row" style="left:116.6px;top:654.2px"><span id="r38" class="sx" style="transform:scaleX(0.9152)">KRAFTSTOFFFILTER [EINZEL-TEIL] / FUEL FILTER [COMPONENT PARTS]</span></div>
<div class="hd" style="left:53.8px;top:680.4px;width:10.2px"></div>
<div class="row" style="left:66.8px;top:671.4px"><span id="c39" class="sx" style="transform:scaleX(0.9006)">A14002</span></div>
<div class="row" style="left:116.6px;top:671.4px"><span id="r39" class="sx" style="transform:scaleX(0.9099)">KRAFTSTOFFPUMPE / FUEL PUMP</span></div>
<div class="box" style="left:29.2px;top:693.2px"><i></i></div>
<div class="hd" style="left:40.2px;top:697.9px;width:4.3px"></div>
<div class="row" style="left:46.7px;top:688.7px"><span id="r40" class="sx" style="transform:scaleX(0.9173)">ABKUEHLUNG SYSTEM / COOLING WATER SYSTEM</span></div>
<div class="hd" style="left:53.8px;top:714.8px;width:10.2px"></div>
<div class="row" style="left:66.8px;top:705.9px"><span id="c41" class="sx" style="transform:scaleX(0.9006)">A40101</span></div>
<div class="row" style="left:116.6px;top:705.9px"><span id="r41" class="sx" style="transform:scaleX(0.9398)">VENTILATOR / FAN</span></div>
<div class="hd" style="left:53.8px;top:732.1px;width:10.2px"></div>
<div class="row" style="left:66.8px;top:723.1px"><span id="c42" class="sx" style="transform:scaleX(0.9006)">A41001</span></div>
<div class="row" style="left:116.6px;top:723.1px"><span id="r42" class="sx" style="transform:scaleX(0.9415)">WASSERROHR / WATER PIPE</span></div>
<div class="hd" style="left:53.8px;top:749.3px;width:10.2px"></div>
<div class="row" style="left:66.8px;top:740.3px"><span id="c43" class="sx" style="transform:scaleX(0.9006)">A42001</span></div>
<div class="row" style="left:116.6px;top:740.3px"><span id="r43" class="sx" style="transform:scaleX(0.9408)">KUEHLER / RADIATOR</span></div>
<div class="hd" style="left:53.8px;top:766.5px;width:10.2px"></div>
<div class="row" style="left:66.8px;top:757.6px"><span id="c44" class="sx" style="transform:scaleX(0.9006)">A43001</span></div>
<div class="row" style="left:116.6px;top:757.6px"><span id="r44" class="sx" style="transform:scaleX(0.9314)">RESERVEBEHALTER / RESERVE TANK</span></div>
<div class="box" style="left:29.2px;top:779.4px"><i></i></div>
<div class="hd" style="left:40.2px;top:784.1px;width:4.3px"></div>
<div class="row" style="left:46.7px;top:774.8px"><span id="r45" class="sx" style="transform:scaleX(0.9100)">ELEKTRISCH SYSTEM / ELECTRICAL SYSTEM</span></div>
</div>
<div class="track" style="left:488.4px;top:98px;width:17.2px;height:789px"></div>
<div class="sbtn" style="left:488.4px;top:98px;width:17.2px;height:16.6px"><svg class="ic" style="left:0;top:0" width="16.6" height="16.6" viewBox="0 0 16.6 16.6"><polygon points="4.6,10.2 12,10.2 8.3,6.2" fill="#000"/></svg></div>
<div class="sbtn" style="left:488.4px;top:114.6px;width:17.2px;height:155px"></div>
<div class="sbtn" style="left:488.4px;top:870.4px;width:17.2px;height:16.6px"><svg class="ic" style="left:0;top:0" width="16.6" height="16.6" viewBox="0 0 16.6 16.6"><polygon points="4.6,6.6 12,6.6 8.3,10.6" fill="#000"/></svg></div>
<div class="track" style="left:4px;top:887px;width:485px;height:16.6px"></div>
<div class="sbtn" style="left:4px;top:887px;width:16.6px;height:16.6px"><svg class="ic" style="left:0;top:0" width="16.6" height="16.6" viewBox="0 0 16.6 16.6"><polygon points="10.2,4.6 10.2,12 6.2,8.3" fill="#000"/></svg></div>
<div class="sbtn" style="left:20.6px;top:887px;width:327.6px;height:16.6px"></div>
<div class="sbtn" style="left:472.4px;top:887px;width:16.6px;height:16.6px"><svg class="ic" style="left:0;top:0" width="16.6" height="16.6" viewBox="0 0 16.6 16.6"><polygon points="6.8,4.6 6.8,12 10.8,8.3" fill="#000"/></svg></div>
<div class="a" style="left:511px;top:78px;width:1019px;height:827px;background:#d4d0c8;box-shadow:inset 1px 1px 0 #f4f3f0"></div>
<div class="a" style="left:511px;top:77.2px;width:1019px;height:1px;background:#8e8b85"></div>
<div class="a" style="left:1529px;top:78px;width:1px;height:25px;background:#8e8b85"></div>
<div class="a" style="left:512px;top:102.4px;width:1018px;height:1.3px;background:#7a7771"></div>
<svg class="a" style="left:515px;top:79px" width="140" height="27" viewBox="515 79 140 27"><path d="M518.5 105.5 L537.5 84.5 Q539.5 82.3 542.5 82.3 L646.5 82.3 Q649.6 82.3 649.6 85.4 L649.6 105.5 Z" fill="#fff" stroke="none"/><path d="M518.5 104.2 L537.5 84.5 Q539.5 82.3 542.5 82.3 L646.5 82.3 Q649.6 82.3 649.6 85.4 L649.6 104" fill="none" stroke="#6f6c64" stroke-width="1"/></svg>
<div class="t" style="left:539.60px;top:84.29px;font-size:11.60px;color:#000;-webkit-text-stroke:0.10px currentColor;font-family:'DejaVu Sans Condensed','DejaVu Sans',sans-serif;font-weight:bold;"><span id="t11" class="sx" style="transform:scaleX(1.0156)">B2261HDB-F2-S5</span></div>
<svg class="ic" style="left:1492px;top:86px" width="30" height="11" viewBox="1492 86 30 11"><polygon points="1492.6,90 1502.2,90 1497.4,94.8" fill="#000"/><path d="M1510.6 87.2 L1519.8 95.8 M1519.8 87.2 L1510.6 95.8" stroke="#000" stroke-width="1.5" fill="none"/></svg>
<div class="a" style="left:512.4px;top:103.7px;width:1017.2px;height:800.9px;background:#1c1c1c"></div>
<div class="a" style="left:514px;top:105.7px;width:1014.6px;height:797.5px;background:#fff"></div>
<div class="a" style="left:514px;top:105.7px;width:1014.6px;height:32.9px;background:#dcd9d2"></div>
<div class="sep" style="left:547.8px;top:111px;height:23px"></div>
<div class="sep" style="left:677.8px;top:111px;height:23px"></div>
<div class="sep" style="left:733.7px;top:111px;height:23px"></div>
<div class="sep" style="left:789.6px;top:111px;height:23px"></div>
<svg class="ic" style="left:514px;top:108px" width="330" height="28" viewBox="514 108 330 28"><path d="M522 120.6 l1.6 -3.6 h1 v-2 h3 v2 h.8 v3.6z M530.2 120.6 v-3.6 h.8 v-2 h3 v2 h1 l1.6 3.6z" fill="#757575"/><rect x="521.8" y="120.4" width="6.8" height="7.2" fill="#6c6c6c"/><rect x="529.8" y="120.4" width="6.8" height="7.2" fill="#6c6c6c"/><rect x="528" y="119" width="2.6" height="4" fill="#8a8a8a"/><rect x="523.4" y="122.2" width="3.4" height="3.8" fill="#b9b9b9"/><rect x="531.6" y="122.2" width="3.4" height="3.8" fill="#b9b9b9"/><path d="M554 127.4 q3.2 -5.4 4.4 -9.4 q.6 -2.2 2 -3.2 l1.2 .6 l-.8 3 l2.6 -4.2 l1.4 .4 l-1.4 4 l3 -4 l1.4 .6 l-2 4.2 l3.2 -3 l1.2 .8 q-1.6 3 -4.2 5.6 q2.2 -.2 4.6 -1.6 l.8 1.2 q-3.4 3.6 -8 4.2 q-2.6 .6 -4.4 3 z" fill="#fff" stroke="#1c1c1c" stroke-width=".9" stroke-linejoin="round"/><rect x="579.8" y="114.8" width="15" height="14" fill="#c9ccd8"/><path d="M581.6 114.8 v14" stroke="#9aa0c0" stroke-width=".6"/><path d="M579.8 116.4 h15" stroke="#9aa0c0" stroke-width=".6"/><path d="M584.6 114.8 v14" stroke="#9aa0c0" stroke-width=".6"/><path d="M579.8 119.4 h15" stroke="#9aa0c0" stroke-width=".6"/><path d="M587.6 114.8 v14" stroke="#9aa0c0" stroke-width=".6"/><path d="M579.8 122.4 h15" stroke="#9aa0c0" stroke-width=".6"/><path d="M590.6 114.8 v14" stroke="#9aa0c0" stroke-width=".6"/><path d="M579.8 125.4 h15" stroke="#9aa0c0" stroke-width=".6"/><path d="M593.6 114.8 v14" stroke="#9aa0c0" stroke-width=".6"/><path d="M579.8 128.4 h15" stroke="#9aa0c0" stroke-width=".6"/><path d="M581.8 123.4 l-2.8 4.4" stroke="#f0561c" stroke-width="2" stroke-linecap="round"/><circle cx="585.4" cy="118.8" r="5.1" fill="url(#gLens)" stroke="#26263e" stroke-width="1.3"/><rect x="604" y="113.4" width="15" height="15.8" rx="1.6" fill="#fdfdfd" stroke="#9ea2a8" stroke-width="1"/><path d="M606.4 116.0 l3.6 0 l-1.2 1.2 l2.2 2.2 l-1.2 1.2 l-2.2 -2.2 z" fill="#3fae3a"/><path d="M606.9 116.0 v3.6" stroke="#3fae3a" stroke-width="1.3"/><path d="M616.6 116.0 l-3.6 0 l1.2 1.2 l-2.2 2.2 l1.2 1.2 l2.2 -2.2 z" fill="#3fae3a"/><path d="M616.1 116.0 v3.6" stroke="#3fae3a" stroke-width="1.3"/><path d="M606.4 126.6 l3.6 0 l-1.2 -1.2 l2.2 -2.2 l-1.2 -1.2 l-2.2 2.2 z" fill="#3fae3a"/><path d="M606.9 126.6 v-3.6" stroke="#3fae3a" stroke-width="1.3"/><path d="M616.6 126.6 l-3.6 0 l1.2 -1.2 l-2.2 -2.2 l1.2 -1.2 l2.2 2.2 z" fill="#3fae3a"/><path d="M616.1 126.6 v-3.6" stroke="#3fae3a" stroke-width="1.3"/><path d="M633 116.4 l1.2 -1.8 h4.8 l1.2 1.8z" fill="#8f97d8"/><rect x="628.2" y="116.4" width="16.4" height="12.2" rx="1.8" fill="#c5c9ee" stroke="#7d84cc" stroke-width="1.1"/><circle cx="636.5" cy="122.6" r="5.3" fill="url(#gCam)" stroke="#1a62d8" stroke-width=".8"/><rect x="654.8" y="115.6" width="12.6" height="12.4" fill="none" stroke="#ee1c24" stroke-width="1.3" stroke-dasharray="1.6 1.1"/><text x="661.1" y="126.6" text-anchor="middle" font-family="Liberation Serif, serif" font-weight="bold" font-size="13.4" fill="#000">T</text><path d="M687.3 123.0 l-2.8 4.4" stroke="#f0561c" stroke-width="2" stroke-linecap="round"/><circle cx="690.9" cy="118.4" r="5.1" fill="url(#gLens)" stroke="#26263e" stroke-width="1.3"/><path d="M693 126.3 h8 M697 122.3 v8" stroke="#1f66d0" stroke-width="2.1"/><path d="M711.9 123.0 l-2.8 4.4" stroke="#f0561c" stroke-width="2" stroke-linecap="round"/><circle cx="715.5" cy="118.4" r="5.1" fill="url(#gLens)" stroke="#26263e" stroke-width="1.3"/><path d="M718 126.4 h7.8" stroke="#1f66d0" stroke-width="2.1"/><path d="M744.2 120.6 h5.6 l3.6 3.2 v4 h-9.2z" fill="#fdfdfd" stroke="#e4e4e4" stroke-width=".6"/><path d="M741.2 121 l4 -4.6 v2.2 q5 -1.6 6.8 3.4 l-2.2 .8 q-1.4 -2.8 -4.6 -1.8 v2.6z" fill="#f4c430" stroke="#e0a818" stroke-width=".4"/><path d="M777.4 120.6 h-5.6 l-3.6 3.2 v4 h9.2z" fill="#fdfdfd" stroke="#e4e4e4" stroke-width=".6"/><path d="M780.4 121 l-4 -4.6 v2.2 q-5 -1.6 -6.8 3.4 l2.2 .8 q1.4 -2.8 4.6 -1.8 v2.6z" fill="#f4c430" stroke="#e0a818" stroke-width=".4"/><rect x="797.4" y="114.2" width="12.0" height="14.4" fill="#fdfdfd" stroke="#a9a9a9" stroke-width=".9"/><rect x="802.8" y="115.4" width="5.4" height="1.1" fill="#bdbdbd"/><rect x="799.4" y="117.8" width="8.6" height="1" fill="#a9daf4"/><rect x="799.4" y="120.1" width="8.6" height="1" fill="#a9daf4"/><rect x="799.4" y="122.4" width="8.6" height="1" fill="#a9daf4"/><rect x="799.4" y="124.7" width="8.6" height="1" fill="#a9daf4"/><rect x="796.4" y="116.6" width="2.2" height="1" fill="#8a8a8a"/><rect x="796.4" y="119.7" width="2.2" height="1" fill="#8a8a8a"/><rect x="796.4" y="122.7" width="2.2" height="1" fill="#8a8a8a"/><rect x="796.4" y="125.8" width="2.2" height="1" fill="#8a8a8a"/><circle cx="807.9" cy="125.8" r="4.2" fill="url(#gGrn)" stroke="#2a8a14" stroke-width=".5"/><path d="M805.4 125.8 h5 M807.9 123.3 v5" stroke="#fff" stroke-width="1.4"/><rect x="821.6" y="114.4" width="14" height="14" fill="#fbfbfd" stroke="#5c7cb8" stroke-width="1.5"/><rect x="821" y="113.8" width="15.2" height="3" fill="#6c8cc8"/><rect x="824.2" y="118.8" width="2.2" height="2" fill="#10184a"/><rect x="824.2" y="122.1" width="2.2" height="2" fill="#10184a"/><rect x="824.2" y="125.4" width="2.2" height="2" fill="#10184a"/><rect x="828.3" y="118.8" width="2.2" height="2" fill="#10184a"/><rect x="828.3" y="122.1" width="2.2" height="2" fill="#10184a"/><rect x="828.3" y="125.4" width="2.2" height="2" fill="#10184a"/><rect x="832.4" y="118.8" width="2.2" height="2" fill="#10184a"/><rect x="832.4" y="122.1" width="2.2" height="2" fill="#10184a"/><rect x="832.4" y="125.4" width="2.2" height="2" fill="#10184a"/></svg>
<svg class="ic" style="left:1426px;top:114px" width="98" height="16" viewBox="1426 114 98 16"><path d="M1427.2 122 L1435.6 115 L1435.6 118.6 L1442 118.6 L1442 125.6 L1435.6 125.6 L1435.6 129 Z" fill="#b4b1aa"/><path d="M1522 122 L1513.6 115 L1513.6 118.6 L1507.2 118.6 L1507.2 125.6 L1513.6 125.6 L1513.6 129 Z" fill="#b4b1aa"/></svg>
<div class="a" style="left:1447.6px;top:110.6px;width:53px;height:21.6px;background:#1a1a1a"></div><div class="a" style="left:1448.8px;top:111.8px;width:50.6px;height:19.2px;background:#dedbd4"></div>
<div class="t" style="left:1467.20px;top:113.39px;font-size:11.60px;color:#000;-webkit-text-stroke:0.25px currentColor;font-family:'DejaVu Sans Condensed','DejaVu Sans',sans-serif;"><span id="t12" class="sx" style="transform:scaleX(0.9407)">1/1</span></div>
<div class="a" style="left:755.6px;top:143px;width:530.8px;height:755.6px;background:#000"></div>
<div class="a" style="left:757px;top:144.4px;width:526.4px;height:751.3px;background:#fff"></div>
<svg class="ic" style="left:830px;top:330px" width="430" height="410" viewBox="830 330 430 410"><defs>
<pattern id="pMesh" width="3" height="3" patternUnits="userSpaceOnUse"><rect width="3" height="3" fill="#0a0a0a"/><rect x=".6" y=".6" width="1.1" height="1.1" fill="#f4f4f4"/></pattern>
<pattern id="pGrille" width="2.6" height="2.6" patternUnits="userSpaceOnUse"><rect width="2.6" height="2.6" fill="#050505"/><rect x=".3" y=".3" width=".8" height=".8" fill="#4e4e4e"/></pattern>
<pattern id="pStep" width="2.6" height="2.6" patternUnits="userSpaceOnUse" patternTransform="rotate(-12)"><rect width="2.6" height="2.6" fill="#fff"/><path d="M0 .5 h2.6 M.5 0 v2.6" stroke="#111" stroke-width="1"/></pattern>
<pattern id="pRib" width="4" height="3.4" patternUnits="userSpaceOnUse"><rect width="4" height="3.4" fill="#fff"/><rect y="0" width="4" height="1.5" fill="#111"/></pattern>
</defs><path d="M1186 572 Q1200 564 1212 570 L1228 586 L1240 612 L1241 640 L1232 660 L1214 673 L1196 672 L1186 664 Z" fill="#fff" stroke="#0a0a0a" stroke-width="1.83" stroke-linejoin="round" stroke-linecap="round" /><path d="M1190.0 570.0 L1200.0 565.0 L1207.0 568.0 L1204.0 574.0 L1192.0 578.0 Z" fill="#0a0a0a" stroke="#0a0a0a" stroke-width="1.22" stroke-linejoin="round" stroke-linecap="round" /><path d="M1192.3 568.8 L1198.5 565.7 L1202.8 567.5 L1200.9 571.3 L1193.5 573.7 Z" fill="#fff"/><path d="M1202.0 582.0 L1216.0 578.0 L1222.0 585.0 L1218.0 591.0 L1204.0 593.0 Z" fill="#0a0a0a" stroke="#0a0a0a" stroke-width="1.22" stroke-linejoin="round" stroke-linecap="round" /><path d="M1205.0 581.8 L1213.6 579.4 L1217.4 583.7 L1214.9 587.4 L1206.2 588.7 Z" fill="#fff"/><path d="M1206.0 598.0 L1224.0 590.0 L1233.0 600.0 L1227.0 607.0 L1208.0 609.0 Z" fill="#0a0a0a" stroke="#0a0a0a" stroke-width="1.22" stroke-linejoin="round" stroke-linecap="round" /><path d="M1210.2 597.5 L1221.3 592.5 L1226.9 598.7 L1223.2 603.0 L1211.4 604.3 Z" fill="#fff"/><path d="M1208.0 618.0 L1230.0 610.0 L1239.0 623.0 L1232.0 629.0 L1210.0 630.0 Z" fill="#0a0a0a" stroke="#0a0a0a" stroke-width="1.22" stroke-linejoin="round" stroke-linecap="round" /><path d="M1213.0 617.9 L1226.6 613.0 L1232.2 621.0 L1227.9 624.7 L1214.2 625.4 Z" fill="#fff"/><path d="M1206.0 638.0 L1230.0 632.0 L1235.0 644.0 L1226.0 651.0 L1206.0 649.0 Z" fill="#0a0a0a" stroke="#0a0a0a" stroke-width="1.22" stroke-linejoin="round" stroke-linecap="round" /><path d="M1210.5 638.2 L1225.4 634.5 L1228.5 641.9 L1222.9 646.3 L1210.5 645.0 Z" fill="#fff"/><path d="M1198.0 654.0 L1220.0 652.0 L1218.0 663.0 L1208.0 671.0 L1196.0 665.0 Z" fill="#0a0a0a" stroke="#0a0a0a" stroke-width="1.22" stroke-linejoin="round" stroke-linecap="round" /><path d="M1200.8 655.1 L1214.4 653.8 L1213.2 660.6 L1207.0 665.6 L1199.6 661.9 Z" fill="#fff"/><path d="M1172 594 Q1192 598 1200 622 Q1204 648 1192 666 L1180 662 Q1160 650 1158 644 Q1176 640 1180 618 Z" fill="#0a0a0a" stroke="#0a0a0a" stroke-width="1.22" stroke-linejoin="round" stroke-linecap="round" /><path d="M1176 606 Q1190 616 1190 634 Q1188 650 1180 656 Q1168 652 1164 644 Q1176 632 1176 606Z" fill="url(#pRib)" stroke="#0a0a0a" stroke-width="0.98" stroke-linejoin="round" stroke-linecap="round" /><path d="M872.6 506 L870.2 402 Q870 386 876 373 L893 349.5 Q899.5 341.2 910.5 341.6 L964 349 Q981 352.5 976 364 L960 393 Q957.6 398 957.6 407 L957.6 498" fill="none" stroke="#0a0a0a" stroke-width="11.8" stroke-linejoin="round"/><path d="M872.6 506 L870.2 402 Q870 386 876 373 L893 349.5 Q899.5 341.2 910.5 341.6 L964 349 Q981 352.5 976 364 L960 393 Q957.6 398 957.6 407 L957.6 498" fill="none" stroke="#fff" stroke-width="7.8" stroke-linejoin="round"/><path d="M877.4 386 Q878 378 882 372 L898 351.6 Q902 346.6 910 346.8 L966.6 354.8" fill="none" stroke="#0a0a0a" stroke-width="3.66" stroke-linejoin="round" stroke-linecap="round" /><path d="M870.6 420 V500 M956 420 V497" fill="none" stroke="#0a0a0a" stroke-width="0.98" stroke-linejoin="round" stroke-linecap="round" /><path d="M863.4 421.6 h15.6 v17.6 h-15.6z" fill="#fff" stroke="#0a0a0a" stroke-width="1.83" stroke-linejoin="round" stroke-linecap="round" /><path d="M863.4 427 h15.6 M863.4 434 h15.6" fill="none" stroke="#0a0a0a" stroke-width="1.22" stroke-linejoin="round" stroke-linecap="round" /><path d="M948.6 423.6 h15.6 v16.6 h-15.6z" fill="#fff" stroke="#0a0a0a" stroke-width="1.83" stroke-linejoin="round" stroke-linecap="round" /><path d="M948.6 429 h15.6 M948.6 435 h15.6" fill="none" stroke="#0a0a0a" stroke-width="1.22" stroke-linejoin="round" stroke-linecap="round" /><rect x="861.4" y="428" width="3" height="8" fill="#0a0a0a"/><rect x="946.6" y="430" width="3" height="7" fill="#0a0a0a"/><rect x="877.6" y="445.6" width="75" height="43" fill="url(#pMesh)"/><path d="M912.8 492 L912.8 463 Q912.8 452.2 923.6 452.2 L945.6 452.2 Q956 452.2 956.2 463 L957.4 492 Z" fill="#fff" stroke="#0a0a0a" stroke-width="2.07" stroke-linejoin="round" stroke-linecap="round" /><path d="M920.6 462 Q920.6 458 924.6 458 L946.4 458 Q950.4 458 950.4 462 L950.4 480 Q950.4 483.6 946.4 483.6 L924.6 483.6 Q920.6 483.6 920.6 480 Z" fill="#fff" stroke="#0a0a0a" stroke-width="1.59" stroke-linejoin="round" stroke-linecap="round" /><path d="M920.6 465.4 H950.4 M920.6 475.4 H950.4" fill="none" stroke="#0a0a0a" stroke-width="1.22" stroke-linejoin="round" stroke-linecap="round" /><path d="M936.6 503 Q948 499.6 962 501 L985 504 L985.4 512.6 Q962 508.6 938 514 Z" fill="#0a0a0a" stroke="#0a0a0a" stroke-width="1.22" stroke-linejoin="round" stroke-linecap="round" /><path d="M934.6 486 L936.2 519 L947.4 545.8" fill="none" stroke="#0a0a0a" stroke-width="2.20" stroke-linejoin="round" stroke-linecap="round" /><circle cx="934.6" cy="484" r="2.6" fill="#fff" stroke="#0a0a0a" stroke-width="1.2"/><g transform="rotate(-9 1002 469.6)"><ellipse cx="1002" cy="469.6" rx="21" ry="6.8" fill="#fff" stroke="#0a0a0a" stroke-width="1.5"/><ellipse cx="1002" cy="470" rx="16.6" ry="4.4" fill="#fff" stroke="#0a0a0a" stroke-width="1.1"/></g><path d="M990 468 L996 478 M1002 466 L1000 478 M1012 465 L1004 478" fill="none" stroke="#0a0a0a" stroke-width="1.95" stroke-linejoin="round" stroke-linecap="round" /><path d="M984 474 L1000 484 L1020 472" fill="none" stroke="#0a0a0a" stroke-width="1.34" stroke-linejoin="round" stroke-linecap="round" /><path d="M996 489 Q1002 478 1020 477 Q1034 477 1043 489 L1006 498 Z" fill="#fff" stroke="#0a0a0a" stroke-width="1.59" stroke-linejoin="round" stroke-linecap="round" /><rect x="963.2" y="467.4" width="18.4" height="38.4" rx="2.4" fill="#0a0a0a"/><circle cx="974.6" cy="488.4" r="4.4" fill="none" stroke="#9a9a9a" stroke-width=".8"/><circle cx="975.6" cy="488.8" r="1.7" fill="#fff"/><path d="M977 489.6 L992 497 L996 504" fill="none" stroke="#0a0a0a" stroke-width="2.44" stroke-linejoin="round" stroke-linecap="round" /><rect x="1075.4" y="463.6" width="17" height="30" rx="2" fill="#0a0a0a"/><circle cx="1084" cy="481" r="2.6" fill="none" stroke="#bdbdbd" stroke-width=".9"/><path d="M1068 492.6 L1086 482" fill="none" stroke="#0a0a0a" stroke-width="2.68" stroke-linejoin="round" stroke-linecap="round" /><path d="M936 506 L1006 500 L1006 575 L940 590 Z" fill="#fff" stroke="#0a0a0a" stroke-width="1.22" stroke-linejoin="round" stroke-linecap="round" /><rect x="936" y="511" width="35" height="24" fill="url(#pRib)"/><path d="M936 511 h35 v24 h-35" fill="none" stroke="#0a0a0a" stroke-width="1.34" stroke-linejoin="round" stroke-linecap="round" /><rect x="933.6" y="527.6" width="5" height="12.4" fill="#0a0a0a"/><g transform="rotate(8 978 531.5)"><ellipse cx="978" cy="531.5" rx="7.4" ry="16.4" fill="url(#pGrille)" stroke="#0a0a0a" stroke-width="1.6"/></g><rect x="985.6" y="520.4" width="18.6" height="19.4" fill="#0a0a0a"/><path d="M996 504 V520 M1000 540 V572" fill="none" stroke="#0a0a0a" stroke-width="1.95" stroke-linejoin="round" stroke-linecap="round" /><path d="M950 540 l6 8 M958 546 l8 2 M970 552 l6 -2" fill="none" stroke="#0a0a0a" stroke-width="2.93" stroke-linejoin="round" stroke-linecap="round" /><path d="M946 560 h56 M944 566 h40" fill="none" stroke="#0a0a0a" stroke-width="1.22" stroke-linejoin="round" stroke-linecap="round" /><path d="M1006 560 L1006 505 Q1007 496.4 1014 494.8 L1043.4 490.2 Q1070 489.2 1092.4 494.4 L1139.4 504 Q1162 511 1175.8 523.2 L1184.4 532 L1186.6 549 L1182 594 L1167.2 604.6 L1121.4 589.6 L1090.4 595 Z" fill="#fff" stroke="#0a0a0a" stroke-width="1.95" stroke-linejoin="round" stroke-linecap="round" /><path d="M1006 508.4 Q1036 510 1060.4 516.8 Q1090 524 1109.6 532 L1119 527.4" fill="none" stroke="#0a0a0a" stroke-width="1.83" stroke-linejoin="round" stroke-linecap="round" /><ellipse cx="1035" cy="492" rx="6.6" ry="2.2" fill="#fff" stroke="#0a0a0a" stroke-width="1.1"/><path d="M1144 511 l8 1.4 l8 6 l-6 .6 l-8 -4z" fill="#0a0a0a" stroke="#0a0a0a" stroke-width="0.98" stroke-linejoin="round" stroke-linecap="round" /><path d="M1005 542.6 L1043.4 546.8 Q1062 551 1073.2 557.4 Q1081 562 1084 568.2 L1091.4 587.4 L1090.4 594.8 L1060.4 585.2 L1011.4 572.4 L1005 566 Z" fill="url(#pGrille)" stroke="#0a0a0a" stroke-width="1.95" stroke-linejoin="round" stroke-linecap="round" /><path d="M1020.4 520.6 L1057 526.2 L1072 546.4 L1065 549.6 L1029.8 541 Z" fill="#fff" stroke="#0a0a0a" stroke-width="1.46" stroke-linejoin="round" stroke-linecap="round" /><path d="M1024.4 523.4 L1055.6 528.4 L1067.6 545 L1063.4 546.6 L1031.6 538.6 Z" fill="url(#pGrille)" stroke="#0a0a0a" stroke-width="0.98" stroke-linejoin="round" stroke-linecap="round" /><path d="M1104.6 535 Q1105 532.6 1108.6 533.4 L1117.8 545 L1122 553 L1118 589 L1103 583 Z" fill="#fff" stroke="#0a0a0a" stroke-width="1.46" stroke-linejoin="round" stroke-linecap="round" /><path d="M1108 538.6 L1116 548.4 L1118.6 555 L1115 585 L1107 581.6 Z" fill="url(#pGrille)" stroke="#0a0a0a" stroke-width="0.98" stroke-linejoin="round" stroke-linecap="round" /><path d="M1126 550 L1167.2 557.4 L1186.4 548.4 L1182 594 L1167.2 604.6 L1121.8 589.6 Z" fill="url(#pGrille)" stroke="#0a0a0a" stroke-width="1.46" stroke-linejoin="round" stroke-linecap="round" /><path d="M1168 557 L1186 549 L1182 594 L1168 604z" fill="#0a0a0a"/><path d="M1118.8 527 L1141 531 L1167.6 540.4 L1168.2 555 L1149 556.6 L1129.4 549.6 Z" fill="#fff" stroke="#0a0a0a" stroke-width="2.68" stroke-linejoin="round" stroke-linecap="round" /><path d="M1141 536 h8 v10 h-8z M1152 540 l8 2 l-2 10 l-7 -2z" fill="none" stroke="#0a0a0a" stroke-width="1.59" stroke-linejoin="round" stroke-linecap="round" /><path d="M1120 527 L1142 529 L1166 538 L1150 535 L1130 532z" fill="#0a0a0a"/><circle cx="1174.6" cy="546.6" r="3.4" fill="#cfcfcf" stroke="#0a0a0a" stroke-width="1.2"/><path d="M1180.6 536 l3 -2 l1.6 12 l-3 2z" fill="#fff" stroke="#0a0a0a" stroke-width="1.22" stroke-linejoin="round" stroke-linecap="round" /><path d="M1092.4 587.4 L1121.4 589.6 L1167.2 604.6 L1174 602 Q1172 608 1160.8 611 Q1140 612 1126.6 608.6 L1096.8 598 Z" fill="#fff" stroke="#0a0a0a" stroke-width="1.83" stroke-linejoin="round" stroke-linecap="round" /><path d="M1000 596 L1096 600 L1124 611 L1124 634 L1092 628 L1000 610 Z" fill="#fff" stroke="#0a0a0a" stroke-width="1.34" stroke-linejoin="round" stroke-linecap="round" /><path d="M1000 603 L1090 612 L1124 622" fill="none" stroke="#0a0a0a" stroke-width="1.10" stroke-linejoin="round" stroke-linecap="round" /><path d="M1030 596 L1090 600 L1110 612 L1080 612 L1040 604z" fill="#0a0a0a"/><path d="M1123.8 611 L1164.4 617 L1164.4 637 L1123.8 634 Z" fill="#fff" stroke="#0a0a0a" stroke-width="1.59" stroke-linejoin="round" stroke-linecap="round" /><path d="M1164.4 617 L1184.6 612 L1184.6 632 L1164.4 637 Z" fill="#fff" stroke="#0a0a0a" stroke-width="1.59" stroke-linejoin="round" stroke-linecap="round" /><path d="M1170 620 h9 v9 h-9z" fill="#0a0a0a"/><circle cx="1130" cy="616" r="1" fill="#0a0a0a"/><circle cx="1130" cy="629" r="1" fill="#0a0a0a"/><circle cx="1146" cy="620" r="1" fill="#0a0a0a"/><circle cx="1158" cy="622" r="1" fill="#0a0a0a"/><circle cx="1158" cy="632" r="1" fill="#0a0a0a"/><path d="M1044 598 L1092 600 L1122 611 L1122 617 L1088 607 L1046 604 Z" fill="#0a0a0a" stroke="#0a0a0a" stroke-width="0.98" stroke-linejoin="round" stroke-linecap="round" /><path d="M1096 614 L1122 622 L1122 632 L1098 626 Z" fill="#0a0a0a" stroke="#0a0a0a" stroke-width="0.98" stroke-linejoin="round" stroke-linecap="round" /><path d="M1060 612 L1080 616 L1078 626 L1058 622 Z" fill="#0a0a0a" stroke="#0a0a0a" stroke-width="0.98" stroke-linejoin="round" stroke-linecap="round" /><path d="M1000 606 L1010 626 L1024 632 M1012 600 L1030 634" fill="none" stroke="#0a0a0a" stroke-width="1.71" stroke-linejoin="round" stroke-linecap="round" /><path d="M935.6 590.4 L957 580 L1008.4 572.8 L980.2 602 L935.6 596 Z" fill="url(#pStep)" stroke="#0a0a0a" stroke-width="1.71" stroke-linejoin="round" stroke-linecap="round" /><path d="M935.6 596 L980.2 602 L980.2 606.4 L935.6 600.4 Z" fill="#fff" stroke="#0a0a0a" stroke-width="1.34" stroke-linejoin="round" stroke-linecap="round" /><path d="M956 560 L986 556 L1000 566 L998 572 L968 578 L956 570 Z" fill="#fff" stroke="#0a0a0a" stroke-width="1.59" stroke-linejoin="round" stroke-linecap="round" /><path d="M956 566 L968 574 L998 568" fill="none" stroke="#0a0a0a" stroke-width="1.34" stroke-linejoin="round" stroke-linecap="round" /><path d="M958 571 L968 578 L984 575 L982 584 L966 588 L958 582z" fill="#0a0a0a"/><path d="M982 573 L1008.6 571 L1004 590 L986 594 L981 606 L976 606 Z" fill="#0a0a0a" stroke="#0a0a0a" stroke-width="0.98" stroke-linejoin="round" stroke-linecap="round" /><path d="M990 574 l-4 16 M998 573 l-4 16" fill="none" stroke="#fff" stroke-width="2.20" stroke-linejoin="round" stroke-linecap="round" /><path d="M976 604 L990 600 L1002 604" fill="none" stroke="#0a0a0a" stroke-width="2.44" stroke-linejoin="round" stroke-linecap="round" /><path d="M1006 576 L1022 600" fill="none" stroke="#0a0a0a" stroke-width="1.46" stroke-linejoin="round" stroke-linecap="round" /><path d="M985 612 l5 10 l5 -8z" fill="#0a0a0a" stroke="#0a0a0a" stroke-width="0.98" stroke-linejoin="round" stroke-linecap="round" /><path d="M997 612 l5 10 l5 -8z" fill="#0a0a0a" stroke="#0a0a0a" stroke-width="0.98" stroke-linejoin="round" stroke-linecap="round" /><path d="M1009 612 l5 10 l5 -8z" fill="#0a0a0a" stroke="#0a0a0a" stroke-width="0.98" stroke-linejoin="round" stroke-linecap="round" /><path d="M886 534 L905 528 L922 556 L930 590 L934 604 L951 612 L952 636 L946 652 L918 669 L896 668 L884 655 Z" fill="#fff" stroke="#0a0a0a" stroke-width="1.83" stroke-linejoin="round" stroke-linecap="round" /><path d="M884 536 L904 530 L911 545 L889 556 Z" fill="#0a0a0a" stroke="#0a0a0a" stroke-width="1.22" stroke-linejoin="round" stroke-linecap="round" /><path d="M889 562 L913 552 L921 572 L928 596 L922 600 L913 578 L893 586 Z" fill="#0a0a0a" stroke="#0a0a0a" stroke-width="1.22" stroke-linejoin="round" stroke-linecap="round" /><path d="M897 590 L915 584 L925 610 L931 622 L924 630 L912 606 L899 612 Z" fill="#0a0a0a" stroke="#0a0a0a" stroke-width="1.22" stroke-linejoin="round" stroke-linecap="round" /><path d="M903 618 L917 612 L929 636 L936 640 L950 614 L952 634 L938 660 L926 652 L914 632 L905 640 Z" fill="#0a0a0a" stroke="#0a0a0a" stroke-width="1.22" stroke-linejoin="round" stroke-linecap="round" /><path d="M896 646 L910 642 L924 658 L914 668 L898 666 Z" fill="#0a0a0a" stroke="#0a0a0a" stroke-width="1.22" stroke-linejoin="round" stroke-linecap="round" /><path d="M918 664 L948 648 L946 656 L922 670 Z" fill="#0a0a0a" stroke="#0a0a0a" stroke-width="1.22" stroke-linejoin="round" stroke-linecap="round" /><path d="M892 571 Q902 566 912 568 M900 598 Q908 594 916 598 M908 626 Q914 622 920 628" fill="none" stroke="#fff" stroke-width="1.95" stroke-linejoin="round" stroke-linecap="round" /><path d="M876.5 660.9 L875.0 666.5 L871.4 658.6 Z M869.6 657.2 L866.7 661.6 L864.5 651.4 Z M862.8 648.8 L858.7 651.7 L858.1 639.9 Z M856.6 636.4 L851.6 637.4 L852.7 625.0 Z M851.5 620.7 L845.9 619.9 L848.6 607.6 Z M847.8 602.9 L842.1 600.3 L846.2 589.2 Z M845.8 584.4 L840.4 580.2 L845.6 571.0 Z M845.7 566.5 L841.0 561.0 L846.9 554.4 Z M847.5 550.5 L843.7 544.1 L849.9 540.5 Z M851.0 537.5 L848.5 530.6 L854.5 530.4 Z M855.9 528.5 L854.9 521.7 L860.4 524.8 Z M862.0 524.1 L862.6 517.9 L867.0 524.1 Z M868.8 524.8 L870.8 519.5 L873.9 528.4 Z" fill="#0a0a0a" stroke="#0a0a0a" stroke-width="1.22" stroke-linejoin="round" stroke-linecap="round" /><g transform="rotate(-6.5 871.3 592.4)"><ellipse cx="871.3" cy="592.4" rx="26.46" ry="70.5" fill="#0a0a0a"/><ellipse cx="873.9" cy="595.8" rx="23.4" ry="46.6" fill="#fff" stroke="#0a0a0a" stroke-width="1"/><ellipse cx="876.7" cy="595.8" rx="19" ry="42" fill="none" stroke="#0a0a0a" stroke-width="2.8"/><ellipse cx="879.3" cy="595.8" rx="13.4" ry="35" fill="none" stroke="#0a0a0a" stroke-width="1.2"/><ellipse cx="883.9" cy="595.8" rx="7" ry="21" fill="none" stroke="#0a0a0a" stroke-width="1.1"/><path d="M859.3 564.4 a19 42 0 0 0 0 62" fill="none" stroke="#0a0a0a" stroke-width="4.4"/></g><path d="M855 504.6 L878 511 Q899 517 910.6 525 Q924 538 929.8 557.6 L934.6 590 L926 592.4 L920.2 561.4 Q914 544 904.8 532.6 Q892 522 874.2 518.4 L856.4 513.6 Z" fill="#fff" stroke="#0a0a0a" stroke-width="1.83" stroke-linejoin="round" stroke-linecap="round" /><path d="M855 504.6 L862 500 L905 512 Q926 522 936 545 L942 586 L934.6 590" fill="#fff" stroke="#0a0a0a" stroke-width="1.59" stroke-linejoin="round" stroke-linecap="round" /><path d="M855 504.6 L878 511 Q899 517 910.6 525 Q924 538 929.8 557.6 L934.6 590" fill="none" stroke="#0a0a0a" stroke-width="1.83" stroke-linejoin="round" stroke-linecap="round" /><path d="M864 500 Q866 494 874 495 L900 502 Q908 505 912 514 L918 528" fill="none" stroke="#0a0a0a" stroke-width="2.93" stroke-linejoin="round" stroke-linecap="round" /><path d="M866 503 L898 511" fill="none" stroke="#0a0a0a" stroke-width="1.22" stroke-linejoin="round" stroke-linecap="round" /><path d="M1050.4 614.2 L1075.2 611.6 L1095.7 627.8 L1109.3 651.7 L1117.9 660.3 L1118.7 689.3 L1111.0 704.7 L1095.7 723.5 L1075.2 725.2 L1056.4 716.7 Z" fill="#fff" stroke="#0a0a0a" stroke-width="1.59" stroke-linejoin="round" stroke-linecap="round" /><path d="M1051.2 615.0 L1075.2 612.5 L1081.1 622.7 L1057.2 630.4 Z" fill="#0a0a0a" stroke="#0a0a0a" stroke-width="1.22" stroke-linejoin="round" stroke-linecap="round" /><path d="M1054.2 614.3 L1071.5 612.4 L1075.8 619.8 L1058.5 625.3 Z" fill="#fff"/><path d="M1065.8 631.2 L1093.1 629.2 L1103.3 636.7 L1096.5 651.7 L1072.6 648.3 Z" fill="#0a0a0a" stroke="#0a0a0a" stroke-width="1.22" stroke-linejoin="round" stroke-linecap="round" /><path d="M1070.3 631.3 L1090.0 629.9 L1097.4 635.3 L1092.4 646.1 L1075.2 643.6 Z" fill="#fff"/><path d="M1077.2 655.2 L1105.9 653.1 L1116.5 660.6 L1109.7 682.5 L1081.0 675.7 Z" fill="#0a0a0a" stroke="#0a0a0a" stroke-width="1.22" stroke-linejoin="round" stroke-linecap="round" /><path d="M1081.8 655.8 L1102.5 654.4 L1110.1 659.8 L1105.2 675.5 L1084.6 670.6 Z" fill="#fff"/><path d="M1080.6 683.5 L1109.7 682.5 L1117.9 689.7 L1102.8 710.2 L1082.3 699.6 Z" fill="#0a0a0a" stroke="#0a0a0a" stroke-width="1.22" stroke-linejoin="round" stroke-linecap="round" /><path d="M1084.5 684.0 L1105.4 683.3 L1111.3 688.4 L1100.5 703.2 L1085.7 695.6 Z" fill="#fff"/><path d="M1075.5 706.8 L1102.5 706.8 L1109.7 703.3 L1096.0 722.1 L1075.5 720.4 Z" fill="#0a0a0a" stroke="#0a0a0a" stroke-width="1.22" stroke-linejoin="round" stroke-linecap="round" /><path d="M1078.9 706.0 L1098.3 706.0 L1103.5 703.5 L1093.6 717.1 L1078.9 715.8 Z" fill="#fff"/><path d="M1058.1 630.6 L1080.3 623.7 L1092.2 629.5 L1066.6 631.2 Z" fill="#0a0a0a" stroke="#0a0a0a" stroke-width="0.73" stroke-linejoin="round" stroke-linecap="round" /><path d="M1073.5 649.0 L1096.7 652.4 L1105.2 653.8 L1077.9 655.2 Z" fill="#0a0a0a" stroke="#0a0a0a" stroke-width="0.73" stroke-linejoin="round" stroke-linecap="round" /><path d="M1081.3 676.7 L1109.3 682.8 L1080.3 683.2 Z" fill="#0a0a0a" stroke="#0a0a0a" stroke-width="0.73" stroke-linejoin="round" stroke-linecap="round" /><path d="M1082.7 700.3 L1102.5 710.5 L1102.2 707.1 L1075.8 706.4 Z" fill="#0a0a0a" stroke="#0a0a0a" stroke-width="0.73" stroke-linejoin="round" stroke-linecap="round" /><path d="M1052.3 720.4 L1051.1 726.3 L1048.3 720.3 Z M1043.2 718.8 L1039.9 723.8 L1039.3 716.7 Z M1034.4 712.7 L1029.3 716.2 L1031.0 708.7 Z M1026.9 702.6 L1020.5 704.4 L1024.2 697.3 Z M1021.4 689.6 L1014.4 689.4 L1019.8 683.5 Z M1018.5 675.1 L1011.6 672.9 L1018.1 668.7 Z M1018.4 660.5 L1012.4 656.6 L1019.3 654.6 Z M1021.3 647.4 L1016.7 642.2 L1023.4 642.5 Z M1026.8 637.1 L1024.1 631.1 L1029.8 633.8 Z M1034.2 630.7 L1033.8 624.5 L1037.9 629.3 Z" fill="#0a0a0a" stroke="#0a0a0a" stroke-width="1.46" stroke-linejoin="round" stroke-linecap="round" /><g transform="rotate(-8.5 1046.4 674.6)"><ellipse cx="1046.4" cy="674.6" rx="30.2" ry="48.6" fill="#0a0a0a"/><ellipse cx="1047" cy="674.2" rx="21.4" ry="33.4" fill="#fff" stroke="#0a0a0a" stroke-width="1"/><ellipse cx="1047.8" cy="674.2" rx="18.4" ry="29.8" fill="none" stroke="#0a0a0a" stroke-width="1.7"/><ellipse cx="1048.4" cy="674.2" rx="15" ry="25.4" fill="none" stroke="#0a0a0a" stroke-width="1"/><path d="M1032.4 650.6 a18.4 29.8 0 0 0 2 48" fill="none" stroke="#0a0a0a" stroke-width="3.2"/><ellipse cx="1049" cy="671.6" rx="4.4" ry="6.2" fill="#3c3c3c" stroke="#0a0a0a" stroke-width="1"/><circle cx="1055.2" cy="674.9" r="1.9" fill="#2a2a2a"/><circle cx="1050.1" cy="681.1" r="1.9" fill="#2a2a2a"/><circle cx="1043.9" cy="677.8" r="1.9" fill="#2a2a2a"/><circle cx="1042.8" cy="668.3" r="1.9" fill="#2a2a2a"/><circle cx="1047.9" cy="662.1" r="1.9" fill="#2a2a2a"/><circle cx="1054.1" cy="665.4" r="1.9" fill="#2a2a2a"/></g></svg>
<div class="a" style="left:1535.4px;top:77.6px;width:503.6px;height:827.4px;background:#2a2a2a"></div>
<div class="a" style="left:1536.3px;top:97.4px;width:501.6px;height:805.8px;background:#fff"></div>
<div class="a" style="left:1535.4px;top:77.6px;width:503.6px;height:19.8px;background:linear-gradient(180deg,#3d5a9e 0%,#23418a 45%,#0f2a72 100%)"></div>
<div class="t" style="left:1541.60px;top:80.43px;font-size:12.90px;color:#fff;-webkit-text-stroke:0.22px currentColor;"><span id="t13" class="sx" style="transform:scaleX(0.9240)">Information</span></div>
<svg class="ic" style="left:2003.5px;top:81.5px" width="10" height="13" viewBox="0 0 10 13"><path d="M2.6 0.8 H7 V6.2 M2.6 0.8 V6.2 M5.9 0.8 V6.2 M1 6.4 H8.8 M4.8 6.6 V11.6" stroke="#fff" stroke-width="1.25" fill="none"/></svg>
<svg class="ic" style="left:2022px;top:83px" width="11" height="10" viewBox="0 0 11 10"><path d="M0.8 0.8 L10 9.4 M10 0.8 L0.8 9.4" stroke="#fff" stroke-width="1.5" fill="none"/></svg>
<div class="t" style="left:1556.10px;top:116.93px;font-size:12.90px;color:#1414ee;-webkit-text-stroke:0.22px currentColor;"><span id="t14" class="sx" style="transform:scaleX(0.8702)">Book Information</span></div>
<div class="a" style="left:1677.5px;top:124.7px;width:74px;height:1.1px;background:#c2c2c2"></div>
<svg class="ic" style="left:1756px;top:123.3px" width="9" height="6" viewBox="0 0 9 6"><path d="M0.8 0.8 L4.4 4.6 L8 0.8" stroke="#a8a8a8" stroke-width="1.1" fill="none"/></svg>
<div class="t" style="left:1564.80px;top:138.53px;font-size:12.90px;color:#868686;-webkit-text-stroke:0.22px currentColor;"><span id="t15" class="sx" style="transform:scaleX(0.8655)">BookCode:</span></div>
<div class="t" style="left:1624.90px;top:138.53px;font-size:12.90px;color:#000;-webkit-text-stroke:0.22px currentColor;"><span id="t16" class="sx" style="transform:scaleX(0.8905)">BKIDK5270</span></div>
<div class="t" style="left:1564.80px;top:152.57px;font-size:12.90px;color:#868686;-webkit-text-stroke:0.22px currentColor;"><span id="t17" class="sx" style="transform:scaleX(0.8733)">Description1:</span></div>
<div class="t" style="left:1634.50px;top:152.57px;font-size:12.90px;color:#000;-webkit-text-stroke:0.22px currentColor;"><span id="t18" class="sx" style="transform:scaleX(0.8778)">B2261HDB-F2-S5</span></div>
<div class="t" style="left:1564.80px;top:166.61px;font-size:12.90px;color:#868686;-webkit-text-stroke:0.22px currentColor;"><span id="t19" class="sx" style="transform:scaleX(0.9012)">BookType:</span></div>
<div class="t" style="left:1622.90px;top:166.61px;font-size:12.90px;color:#000;-webkit-text-stroke:0.22px currentColor;"><span id="t20" class="sx" style="transform:scaleX(0.8666)">GSP</span></div>
<div class="t" style="left:1564.00px;top:180.65px;font-size:12.90px;color:#868686;-webkit-text-stroke:0.22px currentColor;"><span id="t21" class="sx" style="transform:scaleX(0.8707)">CoverPicture:</span></div>
<div class="t" style="left:1636.50px;top:180.65px;font-size:12.90px;color:#000;-webkit-text-stroke:0.22px currentColor;"><span id="t22" class="sx" style="transform:scaleX(0.8944)">89827370</span></div>
<div class="t" style="left:1564.80px;top:194.69px;font-size:12.90px;color:#868686;-webkit-text-stroke:0.22px currentColor;"><span id="t23" class="sx" style="transform:scaleX(0.8650)">PublishingID:</span></div>
<div class="t" style="left:1634.50px;top:194.69px;font-size:12.90px;color:#000;-webkit-text-stroke:0.22px currentColor;"><span id="t24" class="sx" style="transform:scaleX(0.8905)">BKIDK5270</span></div>
<div class="t" style="left:1564.80px;top:208.73px;font-size:12.90px;color:#868686;-webkit-text-stroke:0.22px currentColor;"><span id="t25" class="sx" style="transform:scaleX(0.8910)">UpdateDate:</span></div>
<div class="t" style="left:1633.30px;top:208.73px;font-size:12.90px;color:#000;-webkit-text-stroke:0.22px currentColor;"><span id="t26" class="sx" style="transform:scaleX(0.9300)">04/06/2021 10:45:21</span></div>
<div class="t" style="left:1556.30px;top:341.93px;font-size:12.90px;color:#1414ee;-webkit-text-stroke:0.22px currentColor;"><span id="t27" class="sx" style="transform:scaleX(0.8638)">Page Information</span></div>
<div class="a" style="left:1677.5px;top:349.8px;width:74px;height:1.1px;background:#c2c2c2"></div>
<svg class="ic" style="left:1756px;top:348.4px" width="9" height="6" viewBox="0 0 9 6"><path d="M0.8 0.8 L4.4 4.6 L8 0.8" stroke="#a8a8a8" stroke-width="1.1" fill="none"/></svg>
<div class="t" style="left:1564.80px;top:363.53px;font-size:12.90px;color:#868686;-webkit-text-stroke:0.22px currentColor;"><span id="t28" class="sx" style="transform:scaleX(0.8725)">PageName:</span></div>
<div class="t" style="left:1628.30px;top:363.53px;font-size:12.90px;color:#000;-webkit-text-stroke:0.22px currentColor;"><span id="t29" class="sx" style="transform:scaleX(0.8778)">B2261HDB-F2-S5</span></div>
<div class="t" style="left:1564.80px;top:377.53px;font-size:12.90px;color:#868686;-webkit-text-stroke:0.22px currentColor;"><span id="t30" class="sx" style="transform:scaleX(0.8803)">[Picture 1]</span></div>
<div class="t" style="left:1564.80px;top:391.63px;font-size:12.90px;color:#868686;-webkit-text-stroke:0.22px currentColor;"><span id="t31" class="sx" style="transform:scaleX(0.8498)">PictureFile:</span></div>
<div class="t" style="left:1620.20px;top:391.63px;font-size:12.90px;color:#000;-webkit-text-stroke:0.22px currentColor;"><span id="t32" class="sx" style="transform:scaleX(0.8961)">89827370</span></div>
<div class="a" style="left:2042px;top:82.4px;width:26px;height:117px;border:1px solid #8e8b83;border-right:none;border-radius:5px 0 0 5px;background:linear-gradient(90deg,#d9d6cf,#cfcbc2);box-sizing:border-box"></div>
<svg class="ic" style="left:2046px;top:86px" width="14" height="16" viewBox="0 0 14 16"><path d="M6.5 0.8 L1.2 7 L4.6 7 Q5.4 11.5 9.2 14.4 Q8.4 10.4 9.4 7 L12.6 7 Z" fill="#f6a21a" stroke="#e08a0a" stroke-width=".5"/></svg>
<div class="a" style="left:2050.4px;top:107.2px;width:0;height:0;transform-origin:0 0;transform:rotate(90deg)"><div class="t" style="left:0.00px;top:-12.08px;font-size:11.80px;color:#222;-webkit-text-stroke:0.10px currentColor;font-family:'DejaVu Sans Condensed','DejaVu Sans',sans-serif;"><span id="t33" class="sx" style="transform:scaleX(0.9824)">Selection List</span></div></div>
<div class="a" style="left:1px;top:906.4px;width:2065px;height:1.2px;background:#f6f5f2"></div>
<div class="t" style="left:5.60px;top:912.83px;font-size:12.90px;color:#000;-webkit-text-stroke:0.22px currentColor;"><span id="t34" class="sx" style="transform:scaleX(0.8963)">Ready</span></div>
<svg class="a" style="left:2033px;top:911px" width="18" height="18" viewBox="0 0 18 18"><defs><radialGradient id="rd" cx="40%" cy="35%" r="70%"><stop offset="0" stop-color="#f04048"/><stop offset="1" stop-color="#d8101c"/></radialGradient></defs><circle cx="9" cy="9" r="7.2" fill="url(#rd)"/></svg>
<div class="a" style="left:1px;top:932.6px;width:2065px;height:1.2px;background:#f3f2ef"></div>
<div class="a" style="left:1px;top:934px;width:2065px;height:3px;background:#d6d3cc"></div>
<div class="a" style="left:3px;top:935.2px;width:56px;height:2px;background:#fff"></div>
<div class="a" style="left:123px;top:935.2px;width:50px;height:2px;background:#3a3a3a"></div>
<div class="a" style="left:1844px;top:935.4px;width:222px;height:2px;background:#8a8882"></div>
</body></html>
